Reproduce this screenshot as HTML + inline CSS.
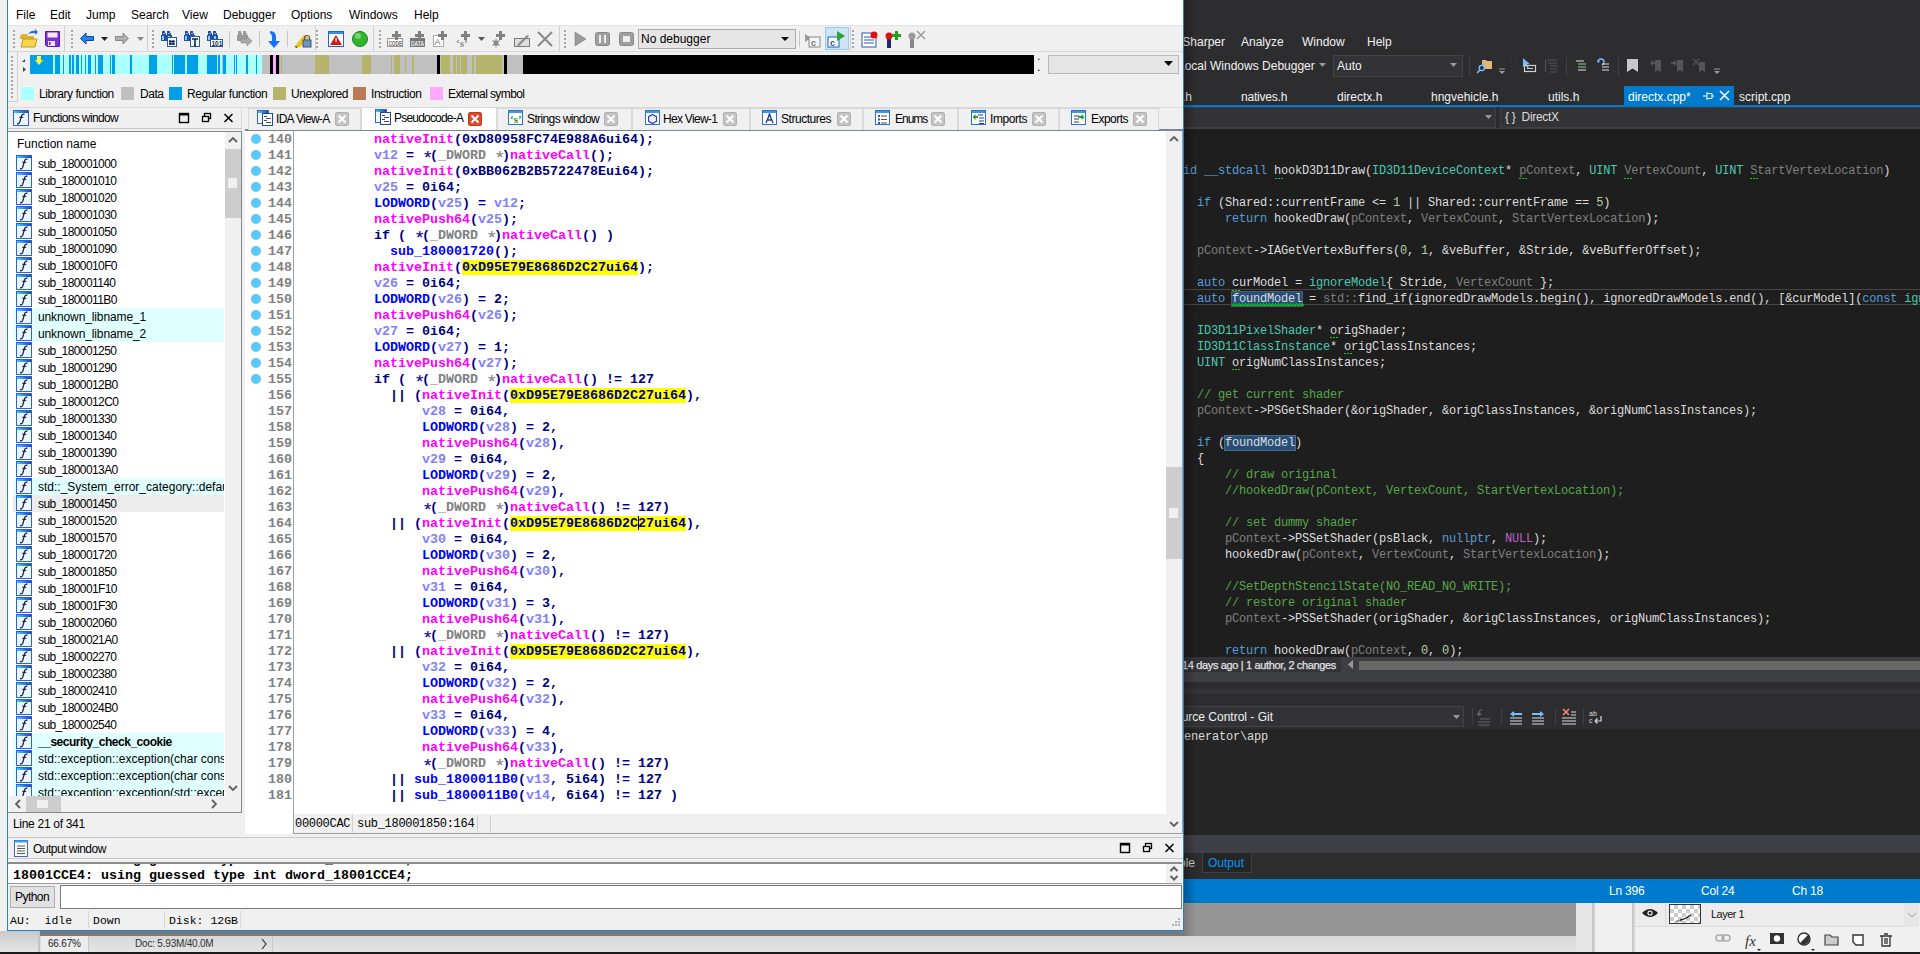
<!DOCTYPE html>
<html><head><meta charset="utf-8">
<style>
*{margin:0;padding:0;box-sizing:border-box}
html,body{width:1920px;height:954px;overflow:hidden;background:#1e1e1e;font-family:"Liberation Sans",sans-serif;font-size:12px}
.a{position:absolute}
.t{position:absolute;white-space:pre;line-height:16px;letter-spacing:-0.45px}
pre,.m{font-family:"Liberation Mono",monospace}
/* IDA */
#ida{left:0;top:0;width:1184px;height:931px;background:#f0f0f0}
.menu span{position:absolute;top:8px;color:#000}
.ico{position:absolute}
.tab{position:absolute;top:108px;height:22px;border:1px solid #d9d9d9;border-bottom:none;background:#f0f0f0}
.tabx{position:absolute;width:14px;height:14px;border-radius:2px;background:#c8c8c8;top:4px}
.tabx:before,.tabx:after{content:"";position:absolute;left:6px;top:2px;width:2px;height:10px;background:#fff;transform:rotate(45deg)}
.tabx:after{transform:rotate(-45deg)}
.fl div{position:absolute;left:13px;width:211px;height:17px;overflow:hidden}
.fl span{position:absolute;left:25px;top:2px;white-space:pre;color:#000;font-size:12px;line-height:15px;letter-spacing:-0.6px}
.fi2{position:absolute;display:block;left:3px;top:0px;width:16px;height:16px}
.fi{position:absolute;display:block;left:3px;top:1px;width:16px;height:15px;border:1px solid #2a5fc9;background:#e8f6ff}
.fi:before{content:"";position:absolute;left:0;top:0;right:0;height:2px;background:linear-gradient(90deg,#3fb8ff,#1d47c8)}
.fi:after{content:"\0192";position:absolute;left:3px;top:0px;font-family:"Liberation Serif",serif;font-style:italic;font-size:13px;line-height:14px;color:#1a1a3a}
#code{position:absolute;left:374px;top:132px;font-family:"Liberation Mono",monospace;font-weight:bold;font-size:13.333px;line-height:16px;color:#000080;white-space:pre}
#code div{height:16px}
#code b{font-weight:bold}
.ast{font-style:normal;position:relative;top:5px;display:inline-block;width:8px;text-align:center;font-size:19px;line-height:0;font-weight:normal}
.cur{display:inline-block;width:1px;height:14px;background:#000;vertical-align:-3px;margin-right:-1px}
.f{color:#ff00ff}.v{color:#8080ff}.g{color:#808080}.b{color:#0000ff}.y{background:#ffff00}
#ln{position:absolute;left:268px;top:132px;font-family:"Liberation Mono",monospace;font-weight:bold;font-size:13.333px;line-height:16px;color:#808080;white-space:pre}
.dot{position:absolute;left:251px;width:10px;height:10px;border-radius:50%;background:#5ac8fa}
/* VS */
#vs{left:1184px;top:0;width:736px;height:903px;background:#2d2d30;overflow:hidden}
.vm span{position:absolute;top:35px;color:#f1f1f1}
#vcode{position:absolute;left:-15px;top:163px;font-family:"Liberation Mono",monospace;font-size:12px;letter-spacing:-0.2px;line-height:16px;color:#dcdcdc;white-space:pre}
#vcode div{height:16px}
#vcode b{font-weight:normal}
.hl{outline:1px solid #555a60;background:#264f78}
.hl2{background:#264f78;outline:1px solid #4a6a8a}
.k{color:#569cd6}.ty{color:#4ec9b0}.p{color:#7f7f7f}.c{color:#57a64a}.n{color:#b5cea8}.mac{color:#bd63c5}
</style></head><body>
<svg width="0" height="0" style="position:absolute"><defs><linearGradient id="fg" x1="0" x2="1"><stop offset="0" stop-color="#3fd0ff"/><stop offset="1" stop-color="#1a40c0"/></linearGradient></defs></svg>


<!-- bottom photoshop area -->
<div class="a" style="left:0;top:902px;width:1576px;height:34px;background:#959595"></div>
<div class="a" style="left:0;top:936px;width:1576px;height:16px;background:linear-gradient(#d8d8d8,#e4e4e4)"></div>
<div class="a" style="left:0;top:931px;width:1196px;height:5px;background:#7a7a7a"></div>
<div class="a" style="left:1184px;top:902px;width:12px;height:34px;background:linear-gradient(90deg,#7a7a7a,#959595)"></div>
<div class="a" style="left:0;top:931px;width:40px;height:21px;background:linear-gradient(#c8c8c8,#e6e6e6)"></div>
<div class="a" style="left:38px;top:931px;width:2px;height:21px;background:#c4c4c4"></div>
<div class="a" style="left:41px;top:936px;width:47px;height:16px;background:#ececec"></div>
<div class="a" style="left:88px;top:936px;width:1px;height:16px;background:#c8c8c8"></div>
<div class="a" style="left:272px;top:936px;width:1px;height:16px;background:#c8c8c8"></div>
<div class="t" style="left:48px;top:936px;font-size:10px;line-height:16px;color:#222;letter-spacing:-0.2px">66.67%</div>
<div class="t" style="left:135px;top:936px;font-size:10px;line-height:16px;color:#333;letter-spacing:-0.2px">Doc: 5.93M/40.0M</div>
<svg class="a" style="left:260px;top:938px" width="8" height="12"><path d="M2 1l4 5-4 5" fill="none" stroke="#333" stroke-width="1.2"/></svg>
<div class="a" style="left:0;top:952px;width:1920px;height:2px;background:#1a1a1a"></div>
<div class="a" style="left:1576px;top:902px;width:16px;height:50px;background:#e6e6e6"></div>
<div class="a" style="left:1592px;top:902px;width:3px;height:50px;background:#d0d0d0;border-left:1px solid #c4c4c4"></div>
<div class="a" style="left:1595px;top:902px;width:38px;height:50px;background:#f0f0f0"></div>
<div class="a" style="left:1632px;top:902px;width:3px;height:50px;background:#d4d4d4;border-left:1px solid #c4c4c4"></div>
<div class="a" style="left:1635px;top:902px;width:285px;height:50px;background:#f0f0f0"></div>
<div class="a" style="left:1635px;top:902px;width:284px;height:25px;background:#ececec;border-bottom:1px solid #dadada"></div>
<div class="a" style="left:1665px;top:902px;width:1px;height:25px;background:#dadada"></div>
<svg class="a" style="left:1641px;top:907px" width="18" height="12"><path d="M1 6q8-8 16 0q-8 8-16 0z" fill="#222"/><circle cx="9" cy="6" r="2.6" fill="#fff"/><circle cx="9" cy="6" r="1.5" fill="#222"/></svg>
<div class="a" style="left:1669px;top:904px;width:32px;height:20px;border:1px solid #333;background-color:#fff;background-image:linear-gradient(45deg,#ccc 25%,transparent 25%,transparent 75%,#ccc 75%),linear-gradient(45deg,#ccc 25%,transparent 25%,transparent 75%,#ccc 75%);background-size:8px 8px;background-position:0 0,4px 4px"></div>
<div class="t" style="left:1711px;top:906px;font-size:11px;color:#111;letter-spacing:-0.5px">Layer 1</div>
<svg class="a" style="left:1670px;top:905px" width="30" height="18"><path d="M10 15 q6-1 9-4 M19 11 l2-1" fill="none" stroke="#222" stroke-width="1.3"/><path d="M6 16h6" stroke="#555"/></svg>
<div class="a" style="left:1904px;top:903px;width:15px;height:24px;background:#e6e6e6"></div>
<svg class="a" style="left:1907px;top:912px" width="10" height="6"><path d="M1 1l4 4 4-4" fill="none" stroke="#999"/></svg>
<svg class="a" style="left:1710px;top:930px" width="190" height="22">
  <g fill="none" stroke="#aaa" stroke-width="1.5"><rect x="6" y="5" width="8" height="6" rx="3"/><rect x="12" y="5" width="8" height="6" rx="3"/></g>
  <text x="35" y="16" font-family="Liberation Serif" font-style="italic" font-size="15" fill="#333">fx</text>
  <path d="M47 19h4l-2 2z" fill="#222"/>
  <rect x="60" y="3" width="14" height="11" fill="#333"/><circle cx="67" cy="8.5" r="3.2" fill="#fff"/>
  <circle cx="94" cy="9" r="6" fill="#fff" stroke="#333" stroke-width="1.4"/><path d="M98.2 4.8 a6 6 0 0 1 -8.4 8.4z" fill="#333"/>
  <path d="M101 19h4l-2 2z" fill="#222"/>
  <path d="M115 5h5l2 2h6v8h-13z" fill="#ccc" stroke="#444" stroke-width="1.2"/>
  <path d="M143 5h10v10h-7l-3-3z" fill="#fff" stroke="#333" stroke-width="1.4"/>
  <path d="M170 6h12M174 4h4M172 6v10h8v-10M175 8v6M177 8v6" fill="none" stroke="#333" stroke-width="1.3"/>
</svg>

<div class="a" style="left:1184px;top:0;width:12px;height:903px;background:linear-gradient(90deg,rgba(0,0,0,0.28),rgba(0,0,0,0));z-index:5"></div>
<!-- left background strip -->
<div class="a" style="left:0;top:0;width:7px;height:931px;background:linear-gradient(90deg,#c4c4c4 0,#c8c8c8 1px,#dedede 2px,#e2e2e2)"></div>
<div class="a" style="left:5px;top:1px;width:2px;height:8px;background:repeating-linear-gradient(#8a8a8a 0 1px,transparent 1px 2px)"></div>
<div class="a" style="left:1px;top:16px;width:6px;height:12px;background:#cfcfcf"></div>
<div class="a" style="left:6px;top:20px;width:1px;height:5px;background:#222"></div>
<div class="a" style="left:3px;top:67px;width:4px;height:30px;background:#a8a8a8;border-radius:2px 0 0 2px"></div>
<div class="a" style="left:4px;top:595px;width:3px;height:8px;background:#333"></div>
<div class="a" style="left:4px;top:612px;width:3px;height:20px;border:1px solid #555;border-right:none;background:#fff"></div>

<!-- IDA window -->
<div id="ida" class="a">
  <div class="a" style="left:7px;top:0;width:1px;height:931px;background:#1883d7"></div>
  <div class="a" style="left:1183px;top:0;width:1px;height:931px;background:#1883d7"></div>
  <div class="a" style="left:7px;top:930px;width:1177px;height:1px;background:#1883d7"></div>
  <!-- menu -->
  <div class="a menu" style="left:8px;top:0;width:1175px;height:25px;background:#fff">
    <span style="left:8px">File</span><span style="left:42px">Edit</span><span style="left:78px">Jump</span><span style="left:123px">Search</span><span style="left:174px">View</span><span style="left:215px">Debugger</span><span style="left:283px">Options</span><span style="left:341px">Windows</span><span style="left:406px">Help</span>
  </div>

  <!-- toolbar row -->
  <div class="a" style="left:8px;top:25px;width:1175px;height:27px;background:#f0f0f0;border-top:1px solid #e3e3e3"></div>
  <div class="a" style="left:8px;top:51px;width:1175px;height:1px;background:#d7d7d7"></div>
  <svg class="a" style="left:8px;top:25px" width="1175" height="27">
    <g fill="#a8a8a8">
      <!-- grips -->
      <rect x="5" y="5" width="2" height="2"/><rect x="5" y="9" width="2" height="2"/><rect x="5" y="13" width="2" height="2"/><rect x="5" y="17" width="2" height="2"/><rect x="5" y="21" width="2" height="2"/><rect x="63" y="5" width="2" height="2"/><rect x="63" y="9" width="2" height="2"/><rect x="63" y="13" width="2" height="2"/><rect x="63" y="17" width="2" height="2"/><rect x="63" y="21" width="2" height="2"/><rect x="144" y="5" width="2" height="2"/><rect x="144" y="9" width="2" height="2"/><rect x="144" y="13" width="2" height="2"/><rect x="144" y="17" width="2" height="2"/><rect x="144" y="21" width="2" height="2"/><rect x="308" y="5" width="2" height="2"/><rect x="308" y="9" width="2" height="2"/><rect x="308" y="13" width="2" height="2"/><rect x="308" y="17" width="2" height="2"/><rect x="308" y="21" width="2" height="2"/><rect x="371" y="5" width="2" height="2"/><rect x="371" y="9" width="2" height="2"/><rect x="371" y="13" width="2" height="2"/><rect x="371" y="17" width="2" height="2"/><rect x="371" y="21" width="2" height="2"/><rect x="556" y="5" width="2" height="2"/><rect x="556" y="9" width="2" height="2"/><rect x="556" y="13" width="2" height="2"/><rect x="556" y="17" width="2" height="2"/><rect x="556" y="21" width="2" height="2"/><rect x="844" y="5" width="2" height="2"/><rect x="844" y="9" width="2" height="2"/><rect x="844" y="13" width="2" height="2"/><rect x="844" y="17" width="2" height="2"/><rect x="844" y="21" width="2" height="2"/>
    </g>
    <g stroke="#c5c5c5" stroke-width="1">
      <line x1="56.5" y1="1" x2="56.5" y2="26" stroke="#d0d0d0"/>
      <line x1="139.5" y1="1" x2="139.5" y2="26" stroke="#d0d0d0"/>
      <line x1="221.5" y1="6" x2="221.5" y2="22"/>
      <line x1="251.5" y1="6" x2="251.5" y2="22"/>
      <line x1="279.5" y1="6" x2="279.5" y2="22"/>
      <line x1="307.5" y1="1" x2="307.5" y2="26" stroke="#d0d0d0"/>
      <line x1="365.5" y1="1" x2="365.5" y2="26" stroke="#d0d0d0"/>
      <line x1="551.5" y1="1" x2="551.5" y2="26" stroke="#d0d0d0"/>
      <line x1="791.5" y1="6" x2="791.5" y2="22"/>
      <line x1="842.5" y1="1" x2="842.5" y2="26" stroke="#d0d0d0"/>
    </g>
  </svg>
  <div class="a" style="left:8px;top:52px;width:1175px;height:55px;background:#f0f0f0"></div>
  <div class="a" style="left:30px;top:55px;width:232px;height:19px;background:#aaffff"></div>
  <div class="a" style="left:262px;top:55px;width:261px;height:19px;background:#c0c0c0"></div>
  <div class="a" style="left:30px;top:55px;width:23px;height:19px;background:#00a0e6"></div>
  <div class="a" style="left:55px;top:55px;width:5px;height:19px;background:#00a0e6"></div>
  <div class="a" style="left:63px;top:55px;width:1px;height:19px;background:#00a0e6"></div>
  <div class="a" style="left:69px;top:55px;width:2px;height:19px;background:#00a0e6"></div>
  <div class="a" style="left:72px;top:55px;width:2px;height:19px;background:#00a0e6"></div>
  <div class="a" style="left:76px;top:55px;width:3px;height:19px;background:#00a0e6"></div>
  <div class="a" style="left:81px;top:55px;width:1px;height:19px;background:#00a0e6"></div>
  <div class="a" style="left:85px;top:55px;width:1px;height:19px;background:#00a0e6"></div>
  <div class="a" style="left:88px;top:55px;width:3px;height:19px;background:#00a0e6"></div>
  <div class="a" style="left:95px;top:55px;width:1px;height:19px;background:#00a0e6"></div>
  <div class="a" style="left:98px;top:55px;width:5px;height:19px;background:#00a0e6"></div>
  <div class="a" style="left:110px;top:55px;width:1px;height:19px;background:#00a0e6"></div>
  <div class="a" style="left:112px;top:55px;width:3px;height:19px;background:#00a0e6"></div>
  <div class="a" style="left:130px;top:55px;width:2px;height:19px;background:#00a0e6"></div>
  <div class="a" style="left:149px;top:55px;width:8px;height:19px;background:#00a0e6"></div>
  <div class="a" style="left:172px;top:55px;width:1px;height:19px;background:#00a0e6"></div>
  <div class="a" style="left:174px;top:55px;width:11px;height:19px;background:#00a0e6"></div>
  <div class="a" style="left:187px;top:55px;width:11px;height:19px;background:#00a0e6"></div>
  <div class="a" style="left:207px;top:55px;width:10px;height:19px;background:#00a0e6"></div>
  <div class="a" style="left:218px;top:55px;width:2px;height:19px;background:#00a0e6"></div>
  <div class="a" style="left:223px;top:55px;width:3px;height:19px;background:#00a0e6"></div>
  <div class="a" style="left:234px;top:55px;width:1px;height:19px;background:#00a0e6"></div>
  <div class="a" style="left:236px;top:55px;width:1px;height:19px;background:#00a0e6"></div>
  <div class="a" style="left:246px;top:55px;width:2px;height:19px;background:#00a0e6"></div>
  <div class="a" style="left:256px;top:55px;width:1px;height:19px;background:#00a0e6"></div>
  <div class="a" style="left:222px;top:55px;width:1px;height:19px;background:#c0c0c0"></div>
  <div class="a" style="left:270px;top:55px;width:3px;height:19px;background:#000000"></div>
  <div class="a" style="left:273px;top:55px;width:3px;height:19px;background:#ffa8ff"></div>
  <div class="a" style="left:276px;top:55px;width:3px;height:19px;background:#000000"></div>
  <div class="a" style="left:279px;top:55px;width:1px;height:19px;background:#b4b46c"></div>
  <div class="a" style="left:281px;top:55px;width:1px;height:19px;background:#b4b46c"></div>
  <div class="a" style="left:315px;top:55px;width:14px;height:19px;background:#b4b46c"></div>
  <div class="a" style="left:362px;top:55px;width:9px;height:19px;background:#b4b46c"></div>
  <div class="a" style="left:391px;top:55px;width:1px;height:19px;background:#b4b46c"></div>
  <div class="a" style="left:394px;top:55px;width:6px;height:19px;background:#b4b46c"></div>
  <div class="a" style="left:405px;top:55px;width:1px;height:19px;background:#b4b46c"></div>
  <div class="a" style="left:412px;top:55px;width:2px;height:19px;background:#b4b46c"></div>
  <div class="a" style="left:437px;top:55px;width:3px;height:19px;background:#000000"></div>
  <div class="a" style="left:441px;top:55px;width:9px;height:19px;background:#b4b46c"></div>
  <div class="a" style="left:453px;top:55px;width:3px;height:19px;background:#b4b46c"></div>
  <div class="a" style="left:457px;top:55px;width:3px;height:19px;background:#b4b46c"></div>
  <div class="a" style="left:461px;top:55px;width:6px;height:19px;background:#b4b46c"></div>
  <div class="a" style="left:472px;top:55px;width:2px;height:19px;background:#b4b46c"></div>
  <div class="a" style="left:476px;top:55px;width:26px;height:19px;background:#b4b46c"></div>
  <div class="a" style="left:504px;top:55px;width:3px;height:19px;background:#000000"></div>
  <div class="a" style="left:523px;top:55px;width:511px;height:19px;background:#000000"></div>
  <svg class="a" style="left:34px;top:56px" width="10" height="10"><path d="M3 0 h4 v4 h2 l-4 5 -4-5 h2z" fill="#ffff40"/></svg>
  <svg class="a" style="left:20px;top:55px" width="8" height="20"><path d="M5 4 l0 3 -3 0z" fill="#444"/><path d="M3 12 l3 2.5 -3 2.5z" fill="#444"/></svg>
  <div class="a" style="left:8px;top:52px;width:10px;height:50px;border-right:1px solid #d0d0d0;border-bottom:1px solid #d0d0d0"></div>
  <svg class="a" style="left:11px;top:56px" width="4" height="45"><rect x="0" y="0" width="2" height="2" fill="#a8a8a8"/><rect x="0" y="4" width="2" height="2" fill="#a8a8a8"/><rect x="0" y="8" width="2" height="2" fill="#a8a8a8"/><rect x="0" y="12" width="2" height="2" fill="#a8a8a8"/><rect x="0" y="16" width="2" height="2" fill="#a8a8a8"/><rect x="0" y="20" width="2" height="2" fill="#a8a8a8"/><rect x="0" y="24" width="2" height="2" fill="#a8a8a8"/><rect x="0" y="28" width="2" height="2" fill="#a8a8a8"/><rect x="0" y="32" width="2" height="2" fill="#a8a8a8"/><rect x="0" y="36" width="2" height="2" fill="#a8a8a8"/><rect x="0" y="40" width="2" height="2" fill="#a8a8a8"/></svg>
  <svg class="a" style="left:1035px;top:55px" width="8" height="20"><path d="M3 3 l2 2 h-2z" fill="#444"/><path d="M3 14 l2 2 h-2z" fill="#444"/></svg>
  <div class="a" style="left:1048px;top:55px;width:131px;height:19px;background:#e5e5e5;border:1px solid #b9b9b9"></div>
  <svg class="a" style="left:1164px;top:61px" width="10" height="6"><path d="M0 0 h9 l-4.5 5z" fill="#000"/></svg>
  <div class="a" style="left:21px;top:87px;width:13px;height:13px;background:#aaffff"></div>
  <div class="t" style="left:39px;top:86px;color:#000">Library function</div>
  <div class="a" style="left:121px;top:87px;width:13px;height:13px;background:#c0c0c0"></div>
  <div class="t" style="left:140px;top:86px;color:#000">Data</div>
  <div class="a" style="left:169px;top:87px;width:13px;height:13px;background:#00a0e6"></div>
  <div class="t" style="left:187px;top:86px;color:#000">Regular function</div>
  <div class="a" style="left:273px;top:87px;width:13px;height:13px;background:#b4b46c"></div>
  <div class="t" style="left:291px;top:86px;color:#000">Unexplored</div>
  <div class="a" style="left:353px;top:87px;width:13px;height:13px;background:#b97a57"></div>
  <div class="t" style="left:371px;top:86px;color:#000">Instruction</div>
  <div class="a" style="left:430px;top:87px;width:13px;height:13px;background:#ffa8ff"></div>
  <div class="t" style="left:448px;top:86px;color:#000;letter-spacing:-0.6px">External symbol</div>
  <div class="a" style="left:8px;top:107px;width:1175px;height:1px;background:#d9d9d9"></div>

  <!-- Functions window -->
  <div class="a" style="left:8px;top:108px;width:234px;height:21px;background:#f0f0f0;border-right:1px solid #d9d9d9;border-bottom:1px solid #c8c8c8"></div>
  <i class="fi2" style="left:13px;top:110px"><svg width="16" height="16" style="position:absolute;left:0;top:0"><rect x="0.5" y="0.5" width="15" height="15" fill="#e9f8ff" stroke="#2f62d0"/><rect x="1" y="1" width="14" height="2" fill="url(#fg)"/><path d="M11.5 4.2 q-2-0.6-2.8 1.2 l-2 7 q-0.6 1.8-2.6 1.2" fill="none" stroke="#1a1a40" stroke-width="1.3"/><path d="M6.3 7.3h4" stroke="#1a1a40" stroke-width="1.1"/></svg></i>
  <div class="t" style="left:33px;top:110px;color:#000;letter-spacing:-0.65px">Functions window</div>
  <svg class="a" style="left:176px;top:111px" width="60" height="14">
    <rect x="3.5" y="2.5" width="9" height="9" fill="none" stroke="#000" stroke-width="1.4"/><rect x="3" y="2" width="10" height="2.5" fill="#000"/>
    <rect x="28.5" y="2.5" width="6" height="5" fill="none" stroke="#000" stroke-width="1.3"/>
    <rect x="26.5" y="5.5" width="6" height="5" fill="#f0f0f0" stroke="#000" stroke-width="1.3"/>
    <path d="M48.5 3 l8 8 M56.5 3 l-8 8" stroke="#000" stroke-width="1.5"/>
  </svg>
  <div class="a" style="left:8px;top:131px;width:234px;height:682px;background:#fff;border:1px solid #828790;border-left:none"></div>
  <div class="t" style="left:17px;top:136px;color:#000;letter-spacing:0">Function name</div>
  <div class="fl a" style="left:0;top:0;width:242px;height:796px;overflow:hidden">
    <div style="top:155px;background:transparent"><i class="fi2"><svg width="16" height="16" style="position:absolute;left:0;top:0"><rect x="0.5" y="0.5" width="15" height="15" fill="#e9f8ff" stroke="#2f62d0"/><rect x="1" y="1" width="14" height="2" fill="url(#fg)"/><path d="M11.5 4.2 q-2-0.6-2.8 1.2 l-2 7 q-0.6 1.8-2.6 1.2" fill="none" stroke="#1a1a40" stroke-width="1.3"/><path d="M6.3 7.3h4" stroke="#1a1a40" stroke-width="1.1"/></svg></i><span style="letter-spacing:-0.6px">sub_180001000</span></div>
    <div style="top:172px;background:transparent"><i class="fi2"><svg width="16" height="16" style="position:absolute;left:0;top:0"><rect x="0.5" y="0.5" width="15" height="15" fill="#e9f8ff" stroke="#2f62d0"/><rect x="1" y="1" width="14" height="2" fill="url(#fg)"/><path d="M11.5 4.2 q-2-0.6-2.8 1.2 l-2 7 q-0.6 1.8-2.6 1.2" fill="none" stroke="#1a1a40" stroke-width="1.3"/><path d="M6.3 7.3h4" stroke="#1a1a40" stroke-width="1.1"/></svg></i><span style="letter-spacing:-0.6px">sub_180001010</span></div>
    <div style="top:189px;background:transparent"><i class="fi2"><svg width="16" height="16" style="position:absolute;left:0;top:0"><rect x="0.5" y="0.5" width="15" height="15" fill="#e9f8ff" stroke="#2f62d0"/><rect x="1" y="1" width="14" height="2" fill="url(#fg)"/><path d="M11.5 4.2 q-2-0.6-2.8 1.2 l-2 7 q-0.6 1.8-2.6 1.2" fill="none" stroke="#1a1a40" stroke-width="1.3"/><path d="M6.3 7.3h4" stroke="#1a1a40" stroke-width="1.1"/></svg></i><span style="letter-spacing:-0.6px">sub_180001020</span></div>
    <div style="top:206px;background:transparent"><i class="fi2"><svg width="16" height="16" style="position:absolute;left:0;top:0"><rect x="0.5" y="0.5" width="15" height="15" fill="#e9f8ff" stroke="#2f62d0"/><rect x="1" y="1" width="14" height="2" fill="url(#fg)"/><path d="M11.5 4.2 q-2-0.6-2.8 1.2 l-2 7 q-0.6 1.8-2.6 1.2" fill="none" stroke="#1a1a40" stroke-width="1.3"/><path d="M6.3 7.3h4" stroke="#1a1a40" stroke-width="1.1"/></svg></i><span style="letter-spacing:-0.6px">sub_180001030</span></div>
    <div style="top:223px;background:transparent"><i class="fi2"><svg width="16" height="16" style="position:absolute;left:0;top:0"><rect x="0.5" y="0.5" width="15" height="15" fill="#e9f8ff" stroke="#2f62d0"/><rect x="1" y="1" width="14" height="2" fill="url(#fg)"/><path d="M11.5 4.2 q-2-0.6-2.8 1.2 l-2 7 q-0.6 1.8-2.6 1.2" fill="none" stroke="#1a1a40" stroke-width="1.3"/><path d="M6.3 7.3h4" stroke="#1a1a40" stroke-width="1.1"/></svg></i><span style="letter-spacing:-0.6px">sub_180001050</span></div>
    <div style="top:240px;background:transparent"><i class="fi2"><svg width="16" height="16" style="position:absolute;left:0;top:0"><rect x="0.5" y="0.5" width="15" height="15" fill="#e9f8ff" stroke="#2f62d0"/><rect x="1" y="1" width="14" height="2" fill="url(#fg)"/><path d="M11.5 4.2 q-2-0.6-2.8 1.2 l-2 7 q-0.6 1.8-2.6 1.2" fill="none" stroke="#1a1a40" stroke-width="1.3"/><path d="M6.3 7.3h4" stroke="#1a1a40" stroke-width="1.1"/></svg></i><span style="letter-spacing:-0.6px">sub_180001090</span></div>
    <div style="top:257px;background:transparent"><i class="fi2"><svg width="16" height="16" style="position:absolute;left:0;top:0"><rect x="0.5" y="0.5" width="15" height="15" fill="#e9f8ff" stroke="#2f62d0"/><rect x="1" y="1" width="14" height="2" fill="url(#fg)"/><path d="M11.5 4.2 q-2-0.6-2.8 1.2 l-2 7 q-0.6 1.8-2.6 1.2" fill="none" stroke="#1a1a40" stroke-width="1.3"/><path d="M6.3 7.3h4" stroke="#1a1a40" stroke-width="1.1"/></svg></i><span style="letter-spacing:-0.6px">sub_1800010F0</span></div>
    <div style="top:274px;background:transparent"><i class="fi2"><svg width="16" height="16" style="position:absolute;left:0;top:0"><rect x="0.5" y="0.5" width="15" height="15" fill="#e9f8ff" stroke="#2f62d0"/><rect x="1" y="1" width="14" height="2" fill="url(#fg)"/><path d="M11.5 4.2 q-2-0.6-2.8 1.2 l-2 7 q-0.6 1.8-2.6 1.2" fill="none" stroke="#1a1a40" stroke-width="1.3"/><path d="M6.3 7.3h4" stroke="#1a1a40" stroke-width="1.1"/></svg></i><span style="letter-spacing:-0.6px">sub_180001140</span></div>
    <div style="top:291px;background:transparent"><i class="fi2"><svg width="16" height="16" style="position:absolute;left:0;top:0"><rect x="0.5" y="0.5" width="15" height="15" fill="#e9f8ff" stroke="#2f62d0"/><rect x="1" y="1" width="14" height="2" fill="url(#fg)"/><path d="M11.5 4.2 q-2-0.6-2.8 1.2 l-2 7 q-0.6 1.8-2.6 1.2" fill="none" stroke="#1a1a40" stroke-width="1.3"/><path d="M6.3 7.3h4" stroke="#1a1a40" stroke-width="1.1"/></svg></i><span style="letter-spacing:-0.6px">sub_1800011B0</span></div>
    <div style="top:308px;background:#e0ffff"><i class="fi2"><svg width="16" height="16" style="position:absolute;left:0;top:0"><rect x="0.5" y="0.5" width="15" height="15" fill="#e9f8ff" stroke="#2f62d0"/><rect x="1" y="1" width="14" height="2" fill="url(#fg)"/><path d="M11.5 4.2 q-2-0.6-2.8 1.2 l-2 7 q-0.6 1.8-2.6 1.2" fill="none" stroke="#1a1a40" stroke-width="1.3"/><path d="M6.3 7.3h4" stroke="#1a1a40" stroke-width="1.1"/></svg></i><span style="letter-spacing:-0.12px">unknown_libname_1</span></div>
    <div style="top:325px;background:#e0ffff"><i class="fi2"><svg width="16" height="16" style="position:absolute;left:0;top:0"><rect x="0.5" y="0.5" width="15" height="15" fill="#e9f8ff" stroke="#2f62d0"/><rect x="1" y="1" width="14" height="2" fill="url(#fg)"/><path d="M11.5 4.2 q-2-0.6-2.8 1.2 l-2 7 q-0.6 1.8-2.6 1.2" fill="none" stroke="#1a1a40" stroke-width="1.3"/><path d="M6.3 7.3h4" stroke="#1a1a40" stroke-width="1.1"/></svg></i><span style="letter-spacing:-0.12px">unknown_libname_2</span></div>
    <div style="top:342px;background:transparent"><i class="fi2"><svg width="16" height="16" style="position:absolute;left:0;top:0"><rect x="0.5" y="0.5" width="15" height="15" fill="#e9f8ff" stroke="#2f62d0"/><rect x="1" y="1" width="14" height="2" fill="url(#fg)"/><path d="M11.5 4.2 q-2-0.6-2.8 1.2 l-2 7 q-0.6 1.8-2.6 1.2" fill="none" stroke="#1a1a40" stroke-width="1.3"/><path d="M6.3 7.3h4" stroke="#1a1a40" stroke-width="1.1"/></svg></i><span style="letter-spacing:-0.6px">sub_180001250</span></div>
    <div style="top:359px;background:transparent"><i class="fi2"><svg width="16" height="16" style="position:absolute;left:0;top:0"><rect x="0.5" y="0.5" width="15" height="15" fill="#e9f8ff" stroke="#2f62d0"/><rect x="1" y="1" width="14" height="2" fill="url(#fg)"/><path d="M11.5 4.2 q-2-0.6-2.8 1.2 l-2 7 q-0.6 1.8-2.6 1.2" fill="none" stroke="#1a1a40" stroke-width="1.3"/><path d="M6.3 7.3h4" stroke="#1a1a40" stroke-width="1.1"/></svg></i><span style="letter-spacing:-0.6px">sub_180001290</span></div>
    <div style="top:376px;background:transparent"><i class="fi2"><svg width="16" height="16" style="position:absolute;left:0;top:0"><rect x="0.5" y="0.5" width="15" height="15" fill="#e9f8ff" stroke="#2f62d0"/><rect x="1" y="1" width="14" height="2" fill="url(#fg)"/><path d="M11.5 4.2 q-2-0.6-2.8 1.2 l-2 7 q-0.6 1.8-2.6 1.2" fill="none" stroke="#1a1a40" stroke-width="1.3"/><path d="M6.3 7.3h4" stroke="#1a1a40" stroke-width="1.1"/></svg></i><span style="letter-spacing:-0.6px">sub_1800012B0</span></div>
    <div style="top:393px;background:transparent"><i class="fi2"><svg width="16" height="16" style="position:absolute;left:0;top:0"><rect x="0.5" y="0.5" width="15" height="15" fill="#e9f8ff" stroke="#2f62d0"/><rect x="1" y="1" width="14" height="2" fill="url(#fg)"/><path d="M11.5 4.2 q-2-0.6-2.8 1.2 l-2 7 q-0.6 1.8-2.6 1.2" fill="none" stroke="#1a1a40" stroke-width="1.3"/><path d="M6.3 7.3h4" stroke="#1a1a40" stroke-width="1.1"/></svg></i><span style="letter-spacing:-0.6px">sub_1800012C0</span></div>
    <div style="top:410px;background:transparent"><i class="fi2"><svg width="16" height="16" style="position:absolute;left:0;top:0"><rect x="0.5" y="0.5" width="15" height="15" fill="#e9f8ff" stroke="#2f62d0"/><rect x="1" y="1" width="14" height="2" fill="url(#fg)"/><path d="M11.5 4.2 q-2-0.6-2.8 1.2 l-2 7 q-0.6 1.8-2.6 1.2" fill="none" stroke="#1a1a40" stroke-width="1.3"/><path d="M6.3 7.3h4" stroke="#1a1a40" stroke-width="1.1"/></svg></i><span style="letter-spacing:-0.6px">sub_180001330</span></div>
    <div style="top:427px;background:transparent"><i class="fi2"><svg width="16" height="16" style="position:absolute;left:0;top:0"><rect x="0.5" y="0.5" width="15" height="15" fill="#e9f8ff" stroke="#2f62d0"/><rect x="1" y="1" width="14" height="2" fill="url(#fg)"/><path d="M11.5 4.2 q-2-0.6-2.8 1.2 l-2 7 q-0.6 1.8-2.6 1.2" fill="none" stroke="#1a1a40" stroke-width="1.3"/><path d="M6.3 7.3h4" stroke="#1a1a40" stroke-width="1.1"/></svg></i><span style="letter-spacing:-0.6px">sub_180001340</span></div>
    <div style="top:444px;background:transparent"><i class="fi2"><svg width="16" height="16" style="position:absolute;left:0;top:0"><rect x="0.5" y="0.5" width="15" height="15" fill="#e9f8ff" stroke="#2f62d0"/><rect x="1" y="1" width="14" height="2" fill="url(#fg)"/><path d="M11.5 4.2 q-2-0.6-2.8 1.2 l-2 7 q-0.6 1.8-2.6 1.2" fill="none" stroke="#1a1a40" stroke-width="1.3"/><path d="M6.3 7.3h4" stroke="#1a1a40" stroke-width="1.1"/></svg></i><span style="letter-spacing:-0.6px">sub_180001390</span></div>
    <div style="top:461px;background:transparent"><i class="fi2"><svg width="16" height="16" style="position:absolute;left:0;top:0"><rect x="0.5" y="0.5" width="15" height="15" fill="#e9f8ff" stroke="#2f62d0"/><rect x="1" y="1" width="14" height="2" fill="url(#fg)"/><path d="M11.5 4.2 q-2-0.6-2.8 1.2 l-2 7 q-0.6 1.8-2.6 1.2" fill="none" stroke="#1a1a40" stroke-width="1.3"/><path d="M6.3 7.3h4" stroke="#1a1a40" stroke-width="1.1"/></svg></i><span style="letter-spacing:-0.6px">sub_1800013A0</span></div>
    <div style="top:478px;background:#e0ffff"><i class="fi2"><svg width="16" height="16" style="position:absolute;left:0;top:0"><rect x="0.5" y="0.5" width="15" height="15" fill="#e9f8ff" stroke="#2f62d0"/><rect x="1" y="1" width="14" height="2" fill="url(#fg)"/><path d="M11.5 4.2 q-2-0.6-2.8 1.2 l-2 7 q-0.6 1.8-2.6 1.2" fill="none" stroke="#1a1a40" stroke-width="1.3"/><path d="M6.3 7.3h4" stroke="#1a1a40" stroke-width="1.1"/></svg></i><span style="letter-spacing:0px">std::_System_error_category::default_name</span></div>
    <div style="top:495px;background:#ececec"><i class="fi2"><svg width="16" height="16" style="position:absolute;left:0;top:0"><rect x="0.5" y="0.5" width="15" height="15" fill="#e9f8ff" stroke="#2f62d0"/><rect x="1" y="1" width="14" height="2" fill="url(#fg)"/><path d="M11.5 4.2 q-2-0.6-2.8 1.2 l-2 7 q-0.6 1.8-2.6 1.2" fill="none" stroke="#1a1a40" stroke-width="1.3"/><path d="M6.3 7.3h4" stroke="#1a1a40" stroke-width="1.1"/></svg></i><span style="letter-spacing:-0.6px">sub_180001450</span></div>
    <div style="top:512px;background:transparent"><i class="fi2"><svg width="16" height="16" style="position:absolute;left:0;top:0"><rect x="0.5" y="0.5" width="15" height="15" fill="#e9f8ff" stroke="#2f62d0"/><rect x="1" y="1" width="14" height="2" fill="url(#fg)"/><path d="M11.5 4.2 q-2-0.6-2.8 1.2 l-2 7 q-0.6 1.8-2.6 1.2" fill="none" stroke="#1a1a40" stroke-width="1.3"/><path d="M6.3 7.3h4" stroke="#1a1a40" stroke-width="1.1"/></svg></i><span style="letter-spacing:-0.6px">sub_180001520</span></div>
    <div style="top:529px;background:transparent"><i class="fi2"><svg width="16" height="16" style="position:absolute;left:0;top:0"><rect x="0.5" y="0.5" width="15" height="15" fill="#e9f8ff" stroke="#2f62d0"/><rect x="1" y="1" width="14" height="2" fill="url(#fg)"/><path d="M11.5 4.2 q-2-0.6-2.8 1.2 l-2 7 q-0.6 1.8-2.6 1.2" fill="none" stroke="#1a1a40" stroke-width="1.3"/><path d="M6.3 7.3h4" stroke="#1a1a40" stroke-width="1.1"/></svg></i><span style="letter-spacing:-0.6px">sub_180001570</span></div>
    <div style="top:546px;background:transparent"><i class="fi2"><svg width="16" height="16" style="position:absolute;left:0;top:0"><rect x="0.5" y="0.5" width="15" height="15" fill="#e9f8ff" stroke="#2f62d0"/><rect x="1" y="1" width="14" height="2" fill="url(#fg)"/><path d="M11.5 4.2 q-2-0.6-2.8 1.2 l-2 7 q-0.6 1.8-2.6 1.2" fill="none" stroke="#1a1a40" stroke-width="1.3"/><path d="M6.3 7.3h4" stroke="#1a1a40" stroke-width="1.1"/></svg></i><span style="letter-spacing:-0.6px">sub_180001720</span></div>
    <div style="top:563px;background:transparent"><i class="fi2"><svg width="16" height="16" style="position:absolute;left:0;top:0"><rect x="0.5" y="0.5" width="15" height="15" fill="#e9f8ff" stroke="#2f62d0"/><rect x="1" y="1" width="14" height="2" fill="url(#fg)"/><path d="M11.5 4.2 q-2-0.6-2.8 1.2 l-2 7 q-0.6 1.8-2.6 1.2" fill="none" stroke="#1a1a40" stroke-width="1.3"/><path d="M6.3 7.3h4" stroke="#1a1a40" stroke-width="1.1"/></svg></i><span style="letter-spacing:-0.6px">sub_180001850</span></div>
    <div style="top:580px;background:transparent"><i class="fi2"><svg width="16" height="16" style="position:absolute;left:0;top:0"><rect x="0.5" y="0.5" width="15" height="15" fill="#e9f8ff" stroke="#2f62d0"/><rect x="1" y="1" width="14" height="2" fill="url(#fg)"/><path d="M11.5 4.2 q-2-0.6-2.8 1.2 l-2 7 q-0.6 1.8-2.6 1.2" fill="none" stroke="#1a1a40" stroke-width="1.3"/><path d="M6.3 7.3h4" stroke="#1a1a40" stroke-width="1.1"/></svg></i><span style="letter-spacing:-0.6px">sub_180001F10</span></div>
    <div style="top:597px;background:transparent"><i class="fi2"><svg width="16" height="16" style="position:absolute;left:0;top:0"><rect x="0.5" y="0.5" width="15" height="15" fill="#e9f8ff" stroke="#2f62d0"/><rect x="1" y="1" width="14" height="2" fill="url(#fg)"/><path d="M11.5 4.2 q-2-0.6-2.8 1.2 l-2 7 q-0.6 1.8-2.6 1.2" fill="none" stroke="#1a1a40" stroke-width="1.3"/><path d="M6.3 7.3h4" stroke="#1a1a40" stroke-width="1.1"/></svg></i><span style="letter-spacing:-0.6px">sub_180001F30</span></div>
    <div style="top:614px;background:transparent"><i class="fi2"><svg width="16" height="16" style="position:absolute;left:0;top:0"><rect x="0.5" y="0.5" width="15" height="15" fill="#e9f8ff" stroke="#2f62d0"/><rect x="1" y="1" width="14" height="2" fill="url(#fg)"/><path d="M11.5 4.2 q-2-0.6-2.8 1.2 l-2 7 q-0.6 1.8-2.6 1.2" fill="none" stroke="#1a1a40" stroke-width="1.3"/><path d="M6.3 7.3h4" stroke="#1a1a40" stroke-width="1.1"/></svg></i><span style="letter-spacing:-0.6px">sub_180002060</span></div>
    <div style="top:631px;background:transparent"><i class="fi2"><svg width="16" height="16" style="position:absolute;left:0;top:0"><rect x="0.5" y="0.5" width="15" height="15" fill="#e9f8ff" stroke="#2f62d0"/><rect x="1" y="1" width="14" height="2" fill="url(#fg)"/><path d="M11.5 4.2 q-2-0.6-2.8 1.2 l-2 7 q-0.6 1.8-2.6 1.2" fill="none" stroke="#1a1a40" stroke-width="1.3"/><path d="M6.3 7.3h4" stroke="#1a1a40" stroke-width="1.1"/></svg></i><span style="letter-spacing:-0.6px">sub_1800021A0</span></div>
    <div style="top:648px;background:transparent"><i class="fi2"><svg width="16" height="16" style="position:absolute;left:0;top:0"><rect x="0.5" y="0.5" width="15" height="15" fill="#e9f8ff" stroke="#2f62d0"/><rect x="1" y="1" width="14" height="2" fill="url(#fg)"/><path d="M11.5 4.2 q-2-0.6-2.8 1.2 l-2 7 q-0.6 1.8-2.6 1.2" fill="none" stroke="#1a1a40" stroke-width="1.3"/><path d="M6.3 7.3h4" stroke="#1a1a40" stroke-width="1.1"/></svg></i><span style="letter-spacing:-0.6px">sub_180002270</span></div>
    <div style="top:665px;background:transparent"><i class="fi2"><svg width="16" height="16" style="position:absolute;left:0;top:0"><rect x="0.5" y="0.5" width="15" height="15" fill="#e9f8ff" stroke="#2f62d0"/><rect x="1" y="1" width="14" height="2" fill="url(#fg)"/><path d="M11.5 4.2 q-2-0.6-2.8 1.2 l-2 7 q-0.6 1.8-2.6 1.2" fill="none" stroke="#1a1a40" stroke-width="1.3"/><path d="M6.3 7.3h4" stroke="#1a1a40" stroke-width="1.1"/></svg></i><span style="letter-spacing:-0.6px">sub_180002380</span></div>
    <div style="top:682px;background:transparent"><i class="fi2"><svg width="16" height="16" style="position:absolute;left:0;top:0"><rect x="0.5" y="0.5" width="15" height="15" fill="#e9f8ff" stroke="#2f62d0"/><rect x="1" y="1" width="14" height="2" fill="url(#fg)"/><path d="M11.5 4.2 q-2-0.6-2.8 1.2 l-2 7 q-0.6 1.8-2.6 1.2" fill="none" stroke="#1a1a40" stroke-width="1.3"/><path d="M6.3 7.3h4" stroke="#1a1a40" stroke-width="1.1"/></svg></i><span style="letter-spacing:-0.6px">sub_180002410</span></div>
    <div style="top:699px;background:transparent"><i class="fi2"><svg width="16" height="16" style="position:absolute;left:0;top:0"><rect x="0.5" y="0.5" width="15" height="15" fill="#e9f8ff" stroke="#2f62d0"/><rect x="1" y="1" width="14" height="2" fill="url(#fg)"/><path d="M11.5 4.2 q-2-0.6-2.8 1.2 l-2 7 q-0.6 1.8-2.6 1.2" fill="none" stroke="#1a1a40" stroke-width="1.3"/><path d="M6.3 7.3h4" stroke="#1a1a40" stroke-width="1.1"/></svg></i><span style="letter-spacing:-0.6px">sub_1800024B0</span></div>
    <div style="top:716px;background:transparent"><i class="fi2"><svg width="16" height="16" style="position:absolute;left:0;top:0"><rect x="0.5" y="0.5" width="15" height="15" fill="#e9f8ff" stroke="#2f62d0"/><rect x="1" y="1" width="14" height="2" fill="url(#fg)"/><path d="M11.5 4.2 q-2-0.6-2.8 1.2 l-2 7 q-0.6 1.8-2.6 1.2" fill="none" stroke="#1a1a40" stroke-width="1.3"/><path d="M6.3 7.3h4" stroke="#1a1a40" stroke-width="1.1"/></svg></i><span style="letter-spacing:-0.6px">sub_180002540</span></div>
    <div style="top:733px;background:#e0ffff"><i class="fi2"><svg width="16" height="16" style="position:absolute;left:0;top:0"><rect x="0.5" y="0.5" width="15" height="15" fill="#e9f8ff" stroke="#2f62d0"/><rect x="1" y="1" width="14" height="2" fill="url(#fg)"/><path d="M11.5 4.2 q-2-0.6-2.8 1.2 l-2 7 q-0.6 1.8-2.6 1.2" fill="none" stroke="#1a1a40" stroke-width="1.3"/><path d="M6.3 7.3h4" stroke="#1a1a40" stroke-width="1.1"/></svg></i><span style="font-weight:bold;letter-spacing:-0.48px">__security_check_cookie</span></div>
    <div style="top:750px;background:#e0ffff"><i class="fi2"><svg width="16" height="16" style="position:absolute;left:0;top:0"><rect x="0.5" y="0.5" width="15" height="15" fill="#e9f8ff" stroke="#2f62d0"/><rect x="1" y="1" width="14" height="2" fill="url(#fg)"/><path d="M11.5 4.2 q-2-0.6-2.8 1.2 l-2 7 q-0.6 1.8-2.6 1.2" fill="none" stroke="#1a1a40" stroke-width="1.3"/><path d="M6.3 7.3h4" stroke="#1a1a40" stroke-width="1.1"/></svg></i><span style="letter-spacing:0px">std::exception::exception(char const *)</span></div>
    <div style="top:767px;background:#e0ffff"><i class="fi2"><svg width="16" height="16" style="position:absolute;left:0;top:0"><rect x="0.5" y="0.5" width="15" height="15" fill="#e9f8ff" stroke="#2f62d0"/><rect x="1" y="1" width="14" height="2" fill="url(#fg)"/><path d="M11.5 4.2 q-2-0.6-2.8 1.2 l-2 7 q-0.6 1.8-2.6 1.2" fill="none" stroke="#1a1a40" stroke-width="1.3"/><path d="M6.3 7.3h4" stroke="#1a1a40" stroke-width="1.1"/></svg></i><span style="letter-spacing:0px">std::exception::exception(char const *,int)</span></div>
    <div style="top:784px;background:#e0ffff"><i class="fi2"><svg width="16" height="16" style="position:absolute;left:0;top:0"><rect x="0.5" y="0.5" width="15" height="15" fill="#e9f8ff" stroke="#2f62d0"/><rect x="1" y="1" width="14" height="2" fill="url(#fg)"/><path d="M11.5 4.2 q-2-0.6-2.8 1.2 l-2 7 q-0.6 1.8-2.6 1.2" fill="none" stroke="#1a1a40" stroke-width="1.3"/><path d="M6.3 7.3h4" stroke="#1a1a40" stroke-width="1.1"/></svg></i><span style="letter-spacing:0px">std::exception::exception(std::exception const &)</span></div>
  </div>
  <!-- vertical scrollbar functions -->
  <div class="a" style="left:225px;top:132px;width:16px;height:664px;background:#f0f0f0"></div>
  <div class="a" style="left:225px;top:149px;width:16px;height:69px;background:#cdcdcd"></div>
  <div class="a" style="left:228px;top:178px;width:9px;height:10px;background:#f0f0f0"></div>
  <svg class="a" style="left:225px;top:134px" width="16" height="12"><path d="M4 8 l4-4 4 4" fill="none" stroke="#606060" stroke-width="1.8"/></svg>
  <svg class="a" style="left:225px;top:782px" width="16" height="12"><path d="M4 4 l4 4 4-4" fill="none" stroke="#606060" stroke-width="1.8"/></svg>
  <!-- horizontal scrollbar -->
  <div class="a" style="left:9px;top:796px;width:232px;height:16px;background:#f0f0f0"></div>
  <div class="a" style="left:26px;top:796px;width:35px;height:16px;background:#cdcdcd"></div>
  <div class="a" style="left:37px;top:800px;width:11px;height:8px;background:#f0f0f0"></div>
  <svg class="a" style="left:10px;top:796px" width="16" height="16"><path d="M10 4 l-4 4 4 4" fill="none" stroke="#606060" stroke-width="1.8"/></svg>
  <svg class="a" style="left:206px;top:796px" width="16" height="16"><path d="M6 4 l4 4 -4 4" fill="none" stroke="#606060" stroke-width="1.8"/></svg>
  <div class="t" style="left:13px;top:816px;color:#000;letter-spacing:-0.3px">Line 21 of 341</div>

  <!-- code view -->
  <div class="a" style="left:245px;top:129px;width:938px;height:2px;background:#7a8590"></div>
  <div class="a" style="left:245px;top:131px;width:921px;height:683px;background:#fff"></div>
  <div class="a" style="left:293px;top:131px;width:1px;height:683px;background:#a0a0a0"></div>
  <div class="a" style="left:1166px;top:131px;width:16px;height:683px;background:#f0f0f0"></div>
  <div class="a" style="left:1182px;top:131px;width:1px;height:703px;background:#a0a0a0"></div>
  <div class="a" style="left:1166px;top:467px;width:16px;height:92px;background:#cdcdcd"></div>
  <div class="a" style="left:1169px;top:508px;width:9px;height:10px;background:#f0f0f0"></div>
  <svg class="a" style="left:1166px;top:133px" width="16" height="12"><path d="M4 8 l4-4 4 4" fill="none" stroke="#606060" stroke-width="1.8"/></svg>
  <svg class="a" style="left:1166px;top:818px" width="16" height="12"><path d="M4 4 l4 4 4-4" fill="none" stroke="#606060" stroke-width="1.8"/></svg>
  <div class="a" style="left:245px;top:814px;width:48px;height:20px;background:#fff"></div>
  <div class="a" style="left:293px;top:814px;width:873px;height:20px;background:#f0f0f0;border-left:1px solid #a0a0a0"></div>
  <div class="a m" style="left:295px;top:816px;font-size:12px;line-height:16px;color:#000;white-space:pre;letter-spacing:-0.3px">00000CAC</div>
  <div class="a" style="left:352px;top:815px;width:1px;height:18px;background:#d0d0d0"></div>
  <div class="a m" style="left:357px;top:816px;font-size:12px;line-height:16px;color:#000;white-space:pre;letter-spacing:-0.3px">sub_180001850:164</div>
  <div class="a" style="left:477px;top:815px;width:1px;height:18px;background:#d0d0d0"></div>
  <div class="a" style="left:490px;top:815px;width:1px;height:18px;background:#d0d0d0"></div>
  <div class="a" style="left:248px;top:108px;width:113px;height:22px;background:#f0f0f0;border:1px solid #d9d9d9;border-bottom:none"></div>
  <svg class="a" style="left:257px;top:110px" width="17" height="17"><rect x="0.5" y="0.5" width="11" height="13" fill="#f0f8ff" stroke="#2f66c8"/><rect x="1" y="1" width="10" height="2" fill="url(#fg)"/><rect x="5.5" y="3.5" width="10" height="12" fill="#fff" stroke="#1f4a90"/><path d="M7 6.5h3M9 8.5h5M7 10.5h3M9 12.5h5" stroke="#334" stroke-width="0.9"/></svg>
  <div class="t" style="left:276px;top:111px;color:#000;letter-spacing:-0.7px">IDA View-A</div>
  <div class="a" style="left:335px;top:112px;width:14px;height:14px;border-radius:2px;background:#c4c4c4;border:1px solid #b0b0b0"></div><svg class="a" style="left:335px;top:112px" width="14" height="14"><path d="M3.5 3.5l7 7M10.5 3.5l-7 7" stroke="#fff" stroke-width="2"/></svg>
  <div class="a" style="left:361px;top:107px;width:136px;height:23px;background:#ffffff;border:1px solid #d9d9d9;border-bottom:none"></div>
  <svg class="a" style="left:375px;top:109px" width="17" height="17"><rect x="0.5" y="0.5" width="11" height="13" fill="#f0f8ff" stroke="#2f66c8"/><rect x="1" y="1" width="10" height="2" fill="url(#fg)"/><rect x="5.5" y="3.5" width="10" height="12" fill="#fff" stroke="#1f4a90"/><path d="M7 6.5h3M9 8.5h5M7 10.5h3M9 12.5h5" stroke="#334" stroke-width="0.9"/></svg>
  <div class="t" style="left:394px;top:110px;color:#000;letter-spacing:-0.8px">Pseudocode-A</div>
  <div class="a" style="left:468px;top:112px;width:14px;height:14px;border-radius:2px;background:#e04a2a;border:1px solid #c03a1a"></div><svg class="a" style="left:468px;top:112px" width="14" height="14"><path d="M3.5 3.5l7 7M10.5 3.5l-7 7" stroke="#fff" stroke-width="2"/></svg>
  <div class="a" style="left:497px;top:108px;width:135px;height:22px;background:#f0f0f0;border:1px solid #d9d9d9;border-bottom:none"></div>
  <svg class="a" style="left:508px;top:110px" width="16" height="16"><rect x="0.5" y="0.5" width="14" height="14" fill="#fff" stroke="#2f6fd0"/><rect x="1" y="1" width="13" height="2" fill="#3a9af0"/><text x="2" y="12.5" font-family="Liberation Serif" font-size="11" font-weight="bold" fill="#2a8a2a">‘s’</text></svg>
  <div class="t" style="left:527px;top:111px;color:#000;letter-spacing:-0.62px">Strings window</div>
  <div class="a" style="left:604px;top:112px;width:14px;height:14px;border-radius:2px;background:#c4c4c4;border:1px solid #b0b0b0"></div><svg class="a" style="left:604px;top:112px" width="14" height="14"><path d="M3.5 3.5l7 7M10.5 3.5l-7 7" stroke="#fff" stroke-width="2"/></svg>
  <div class="a" style="left:632px;top:108px;width:118px;height:22px;background:#f0f0f0;border:1px solid #d9d9d9;border-bottom:none"></div>
  <svg class="a" style="left:645px;top:110px" width="16" height="16"><rect x="0.5" y="0.5" width="14" height="14" fill="#fff" stroke="#2f6fd0"/><rect x="1" y="1" width="13" height="2" fill="#3a9af0"/><path d="M7.5 4.5 l4 2.2 v4.6 l-4 2.2 -4-2.2 v-4.6z" fill="#e8f0ff" stroke="#2a3ad0" stroke-width="1.1"/></svg>
  <div class="t" style="left:663px;top:111px;color:#000;letter-spacing:-0.7px">Hex View-1</div>
  <div class="a" style="left:723px;top:112px;width:14px;height:14px;border-radius:2px;background:#c4c4c4;border:1px solid #b0b0b0"></div><svg class="a" style="left:723px;top:112px" width="14" height="14"><path d="M3.5 3.5l7 7M10.5 3.5l-7 7" stroke="#fff" stroke-width="2"/></svg>
  <div class="a" style="left:750px;top:108px;width:113px;height:22px;background:#f0f0f0;border:1px solid #d9d9d9;border-bottom:none"></div>
  <svg class="a" style="left:762px;top:110px" width="16" height="16"><rect x="0.5" y="0.5" width="14" height="14" fill="#fff" stroke="#2f6fd0"/><rect x="1" y="1" width="13" height="2" fill="#3a9af0"/><path d="M4 13 l3.5-8.5 3.5 8.5 M5.3 10h4.4" fill="none" stroke="#203a80" stroke-width="1.3"/><circle cx="7.5" cy="4.5" r="1" fill="#203a80"/></svg>
  <div class="t" style="left:781px;top:111px;color:#000;letter-spacing:-0.47px">Structures</div>
  <div class="a" style="left:837px;top:112px;width:14px;height:14px;border-radius:2px;background:#c4c4c4;border:1px solid #b0b0b0"></div><svg class="a" style="left:837px;top:112px" width="14" height="14"><path d="M3.5 3.5l7 7M10.5 3.5l-7 7" stroke="#fff" stroke-width="2"/></svg>
  <div class="a" style="left:863px;top:108px;width:95px;height:22px;background:#f0f0f0;border:1px solid #d9d9d9;border-bottom:none"></div>
  <svg class="a" style="left:875px;top:110px" width="16" height="16"><rect x="0.5" y="0.5" width="14" height="14" fill="#fff" stroke="#2f6fd0"/><rect x="1" y="1" width="13" height="2" fill="#3a9af0"/><g fill="#2a5ab0"><rect x="3" y="5" width="2" height="2"/><rect x="3" y="8.5" width="2" height="2"/><rect x="3" y="12" width="2" height="2"/></g><path d="M6 6h6M6 9.5h6M6 13h6" stroke="#555" stroke-width="1"/></svg>
  <div class="t" style="left:895px;top:111px;color:#000;letter-spacing:-1.0px">Enums</div>
  <div class="a" style="left:931px;top:112px;width:14px;height:14px;border-radius:2px;background:#c4c4c4;border:1px solid #b0b0b0"></div><svg class="a" style="left:931px;top:112px" width="14" height="14"><path d="M3.5 3.5l7 7M10.5 3.5l-7 7" stroke="#fff" stroke-width="2"/></svg>
  <div class="a" style="left:958px;top:108px;width:101px;height:22px;background:#f0f0f0;border:1px solid #d9d9d9;border-bottom:none"></div>
  <svg class="a" style="left:971px;top:110px" width="16" height="16"><rect x="0.5" y="0.5" width="14" height="14" fill="#fff" stroke="#2f6fd0"/><rect x="1" y="1" width="13" height="2" fill="#3a9af0"/><path d="M7 5h5M8 8h5M8 11h5M8 13.5h5" stroke="#203a80"/><path d="M1.5 7 l3-3 v2 h2.5 v2 h-2.5 v2z" fill="#20a020"/></svg>
  <div class="t" style="left:990px;top:111px;color:#000;letter-spacing:-0.43px">Imports</div>
  <div class="a" style="left:1032px;top:112px;width:14px;height:14px;border-radius:2px;background:#c4c4c4;border:1px solid #b0b0b0"></div><svg class="a" style="left:1032px;top:112px" width="14" height="14"><path d="M3.5 3.5l7 7M10.5 3.5l-7 7" stroke="#fff" stroke-width="2"/></svg>
  <div class="a" style="left:1059px;top:108px;width:100px;height:22px;background:#f0f0f0;border:1px solid #d9d9d9;border-bottom:none"></div>
  <svg class="a" style="left:1071px;top:110px" width="16" height="16"><rect x="0.5" y="0.5" width="14" height="14" fill="#fff" stroke="#2f6fd0"/><rect x="1" y="1" width="13" height="2" fill="#3a9af0"/><path d="M3 6h5M3 9h5M3 12h5" stroke="#203a80"/><path d="M13.5 7 l-3-3 v2 h-3 v2 h3 v2z" fill="#20a020"/></svg>
  <div class="t" style="left:1091px;top:111px;color:#000;letter-spacing:-0.53px">Exports</div>
  <div class="a" style="left:1133px;top:112px;width:14px;height:14px;border-radius:2px;background:#c4c4c4;border:1px solid #b0b0b0"></div><svg class="a" style="left:1133px;top:112px" width="14" height="14"><path d="M3.5 3.5l7 7M10.5 3.5l-7 7" stroke="#fff" stroke-width="2"/></svg>
  <div class="dot" style="top:134px"></div>
  <div class="dot" style="top:150px"></div>
  <div class="dot" style="top:166px"></div>
  <div class="dot" style="top:182px"></div>
  <div class="dot" style="top:198px"></div>
  <div class="dot" style="top:214px"></div>
  <div class="dot" style="top:230px"></div>
  <div class="dot" style="top:246px"></div>
  <div class="dot" style="top:262px"></div>
  <div class="dot" style="top:278px"></div>
  <div class="dot" style="top:294px"></div>
  <div class="dot" style="top:310px"></div>
  <div class="dot" style="top:326px"></div>
  <div class="dot" style="top:342px"></div>
  <div class="dot" style="top:358px"></div>
  <div class="dot" style="top:374px"></div>
  <div id="ln">140
141
142
143
144
145
146
147
148
149
150
151
152
153
154
155
156
157
158
159
160
161
162
163
164
165
166
167
168
169
170
171
172
173
174
175
176
177
178
179
180
181
</div>
  <div id="code"><div><b class="f">nativeInit</b>(0xD80958FC74E988A6ui64);</div><div><b class="v">v12</b> = <i class="ast">*</i>(<b class="g">_DWORD <i class="ast">*</i></b>)<b class="f">nativeCall</b>();</div><div><b class="f">nativeInit</b>(0xBB062B2B5722478Eui64);</div><div><b class="v">v25</b> = 0i64;</div><div><b class="b">LODWORD</b>(<b class="v">v25</b>) = <b class="v">v12</b>;</div><div><b class="f">nativePush64</b>(<b class="v">v25</b>);</div><div>if ( <i class="ast">*</i>(<b class="g">_DWORD <i class="ast">*</i></b>)<b class="f">nativeCall</b>() )</div><div>  <b class="b">sub_180001720</b>();</div><div><b class="f">nativeInit</b>(<b class="y">0xD95E79E8686D2C27ui64</b>);</div><div><b class="v">v26</b> = 0i64;</div><div><b class="b">LODWORD</b>(<b class="v">v26</b>) = 2;</div><div><b class="f">nativePush64</b>(<b class="v">v26</b>);</div><div><b class="v">v27</b> = 0i64;</div><div><b class="b">LODWORD</b>(<b class="v">v27</b>) = 1;</div><div><b class="f">nativePush64</b>(<b class="v">v27</b>);</div><div>if ( <i class="ast">*</i>(<b class="g">_DWORD <i class="ast">*</i></b>)<b class="f">nativeCall</b>() != 127</div><div>  || (<b class="f">nativeInit</b>(<b class="y">0xD95E79E8686D2C27ui64</b>),</div><div>      <b class="v">v28</b> = 0i64,</div><div>      <b class="b">LODWORD</b>(<b class="v">v28</b>) = 2,</div><div>      <b class="f">nativePush64</b>(<b class="v">v28</b>),</div><div>      <b class="v">v29</b> = 0i64,</div><div>      <b class="b">LODWORD</b>(<b class="v">v29</b>) = 2,</div><div>      <b class="f">nativePush64</b>(<b class="v">v29</b>),</div><div>      <i class="ast">*</i>(<b class="g">_DWORD <i class="ast">*</i></b>)<b class="f">nativeCall</b>() != 127)</div><div>  || (<b class="f">nativeInit</b>(<b class="y">0xD95E79E8686D2C<i class="cur"></i>27ui64</b>),</div><div>      <b class="v">v30</b> = 0i64,</div><div>      <b class="b">LODWORD</b>(<b class="v">v30</b>) = 2,</div><div>      <b class="f">nativePush64</b>(<b class="v">v30</b>),</div><div>      <b class="v">v31</b> = 0i64,</div><div>      <b class="b">LODWORD</b>(<b class="v">v31</b>) = 3,</div><div>      <b class="f">nativePush64</b>(<b class="v">v31</b>),</div><div>      <i class="ast">*</i>(<b class="g">_DWORD <i class="ast">*</i></b>)<b class="f">nativeCall</b>() != 127)</div><div>  || (<b class="f">nativeInit</b>(<b class="y">0xD95E79E8686D2C27ui64</b>),</div><div>      <b class="v">v32</b> = 0i64,</div><div>      <b class="b">LODWORD</b>(<b class="v">v32</b>) = 2,</div><div>      <b class="f">nativePush64</b>(<b class="v">v32</b>),</div><div>      <b class="v">v33</b> = 0i64,</div><div>      <b class="b">LODWORD</b>(<b class="v">v33</b>) = 4,</div><div>      <b class="f">nativePush64</b>(<b class="v">v33</b>),</div><div>      <i class="ast">*</i>(<b class="g">_DWORD <i class="ast">*</i></b>)<b class="f">nativeCall</b>() != 127)</div><div>  || <b class="b">sub_1800011B0</b>(<b class="v">v13</b>, 5i64) != 127</div><div>  || <b class="b">sub_1800011B0</b>(<b class="v">v14</b>, 6i64) != 127 )</div></div>

  <!-- output window -->
  <div class="a" style="left:8px;top:834px;width:1175px;height:3px;background:#f0f0f0"></div>
  <div class="a" style="left:8px;top:837px;width:1175px;height:1px;background:#c8c8c8"></div>
  <div class="a" style="left:8px;top:838px;width:1175px;height:21px;background:#f0f0f0;border-bottom:1px solid #c8c8c8"></div>
  <svg class="a" style="left:14px;top:840px" width="14" height="17"><rect x="0.5" y="0.5" width="13" height="16" fill="#fff" stroke="#3a6ab8"/><rect x="0.5" y="0.5" width="13" height="2" fill="#3aa0f0"/><path d="M3 6h8M3 8.5h8M3 11h8M3 13.5h8" stroke="#555"/></svg>
  <div class="t" style="left:33px;top:841px;color:#000;letter-spacing:-0.5px">Output window</div>
  <svg class="a" style="left:1115px;top:842px" width="62" height="14">
    <rect x="5.5" y="1.5" width="9" height="9" fill="none" stroke="#000" stroke-width="1.4"/><rect x="5" y="1" width="10" height="2.5" fill="#000"/>
    <rect x="30.5" y="1.5" width="6" height="5" fill="none" stroke="#000" stroke-width="1.3"/>
    <rect x="28.5" y="4.5" width="6" height="5" fill="#f0f0f0" stroke="#000" stroke-width="1.3"/>
    <path d="M50.5 2 l8 8 M58.5 2 l-8 8" stroke="#000" stroke-width="1.5"/>
  </svg>
  <div class="a" style="left:8px;top:862px;width:1174px;height:22px;background:#fff;border-top:2px solid #8c8c8c;border-bottom:1px solid #9a9a9a;overflow:hidden">
    <div class="a m" style="left:5px;top:-12px;font-size:13.333px;font-weight:bold;line-height:16px;color:#000;white-space:pre">18001CCD0: using guessed type int dword_18001CCD0;
18001CCE4: using guessed type int dword_18001CCE4;</div>
  </div>
  <div class="a" style="left:1166px;top:864px;width:16px;height:19px;background:#f0f0f0"></div>
  <svg class="a" style="left:1166px;top:864px" width="16" height="20"><path d="M4.5 7 l3.5-3.5 3.5 3.5M4.5 12 l3.5 3.5 3.5-3.5" fill="none" stroke="#606060" stroke-width="2"/></svg>
  <div class="a" style="left:293px;top:833px;width:890px;height:1px;background:#a0a0a0"></div>
  <div class="a" style="left:8px;top:884px;width:1175px;height:46px;background:#f0f0f0"></div>
  <div class="a" style="left:10px;top:886px;width:45px;height:22px;background:#e1e1e1;border:1px solid #adadad"></div>
  <div class="t" style="left:15px;top:889px;color:#000;letter-spacing:-0.55px">Python</div>
  <div class="a" style="left:60px;top:885px;width:1122px;height:24px;background:#fff;border:1px solid #7a7a7a"></div>
  <div class="a m" style="left:10px;top:913px;font-size:11.5px;line-height:16px;color:#000;white-space:pre">AU:  idle</div>
  <div class="a" style="left:88px;top:911px;width:1px;height:17px;background:#d7d7d7"></div>
  <div class="a m" style="left:93px;top:913px;font-size:11.5px;line-height:16px;color:#000;white-space:pre">Down</div>
  <div class="a" style="left:164px;top:911px;width:1px;height:17px;background:#d7d7d7"></div>
  <div class="a m" style="left:169px;top:913px;font-size:11.5px;line-height:16px;color:#000;white-space:pre">Disk: 12GB</div>
  <div class="a" style="left:240px;top:911px;width:1px;height:17px;background:#d7d7d7"></div>
  <svg class="a" style="left:1169px;top:917px" width="12" height="12"><g fill="#b0b0b0"><rect x="9" y="1" width="2" height="2"/><rect x="6" y="4" width="2" height="2"/><rect x="9" y="4" width="2" height="2"/><rect x="3" y="7" width="2" height="2"/><rect x="6" y="7" width="2" height="2"/><rect x="9" y="7" width="2" height="2"/></g></svg>
  <!-- icons -->
  <svg class="a" style="left:0;top:0" width="1184" height="52">
    <!-- open folder -->
    <path d="M20 36 l2-2 h5 l1 2 h6 v3 h-14z" fill="#e0b030"/>
    <path d="M21 47 l2-8 h14 l-2 8z" fill="#f6d64a" stroke="#c8961c" stroke-width="1"/>
    <path d="M28 34 q3-4 7-3 v-2 l3 3-3 3 v-2 q-4 0-7 1z" fill="#1f6be0"/>
    <!-- save -->
    <path d="M45.5 31.5h14v15h-12.5l-1.5-1.5z" fill="#7a30d8" stroke="#5a1ab0"/>
    <rect x="47.5" y="32.5" width="10" height="5" fill="#f4e6ea"/>
    <rect x="48" y="41" width="7" height="5" fill="#e6e6f6"/>
    <rect x="49" y="42" width="1.5" height="3" fill="#6020b0"/>
    <!-- back arrow -->
    <path d="M80.5 38.5 l5.5-5.5 v3.5 h7.5 v4 h-7.5 v3.5z" fill="#1a8ae8" stroke="#0a2ab0" stroke-width="0.9"/>
    <path d="M101 37 h7 l-3.5 4z" fill="#222"/>
    <!-- forward arrow -->
    <path d="M128.5 38.5 l-5.5-5.5 v3.5 h-7.5 v4 h7.5 v3.5z" fill="#b0b0b0" stroke="#808080" stroke-width="0.9"/>
    <path d="M137 37 h7 l-3.5 4z" fill="#8a8a8a"/>
    <!-- binoculars -->
    <g><path d="M162 31h3v2h1v2h1v6h-6v-6h1v-2z" fill="#2350a8"/><path d="M167 31h3v2h1v2h1v6h-6v-6h1v-2z" fill="#2350a8"/><rect x="162" y="36" width="2" height="4" fill="#8fc8ff"/><rect x="168" y="36" width="2" height="4" fill="#8fc8ff"/><rect x="163" y="33" width="2" height="1" fill="#9ac"/><rect x="168" y="33" width="2" height="1" fill="#9ac"/></g><rect x="167.5" y="37.5" width="9" height="9" fill="#fff" stroke="#2b5a9a"/><path d="M170 40v5M173 40v5M169 41.5h6M169 44h6" stroke="#0a2a60" stroke-width="1.3"/><g><path d="M185 31h3v2h1v2h1v6h-6v-6h1v-2z" fill="#2350a8"/><path d="M190 31h3v2h1v2h1v6h-6v-6h1v-2z" fill="#2350a8"/><rect x="185" y="36" width="2" height="4" fill="#8fc8ff"/><rect x="191" y="36" width="2" height="4" fill="#8fc8ff"/><rect x="186" y="33" width="2" height="1" fill="#9ac"/><rect x="191" y="33" width="2" height="1" fill="#9ac"/></g><rect x="190.5" y="36.5" width="9" height="10" fill="#f0f8ff" stroke="#2b5a9a"/><path d="M192 39h6M195 39v7M194 45.5h2" stroke="#0a2a60" stroke-width="1.6"/><g><path d="M208 31h3v2h1v2h1v6h-6v-6h1v-2z" fill="#2350a8"/><path d="M213 31h3v2h1v2h1v6h-6v-6h1v-2z" fill="#2350a8"/><rect x="208" y="36" width="2" height="4" fill="#8fc8ff"/><rect x="214" y="36" width="2" height="4" fill="#8fc8ff"/><rect x="209" y="33" width="2" height="1" fill="#9ac"/><rect x="214" y="33" width="2" height="1" fill="#9ac"/></g><rect x="210.5" y="39.5" width="12" height="7" fill="#fff" stroke="#2b5a9a"/><text x="211.5" y="45.5" font-family="Liberation Sans" font-size="6.5" font-weight="bold" fill="#0a2a60">101</text><g fill="#999"><path d="M238 31h3v2h1v2h1v6h-6v-6h1v-2z"/><path d="M243 31h3v2h1v2h1v6h-6v-6h1v-2z"/><path d="M241 39 h6 v-3 l5 5 -5 5 v-3 h-6z" fill="#aaa" stroke="#888" stroke-width="0.6"/></g>
    <!-- blue down arrow -->
    <path d="M270 31 q6 0 6 6 v4 h4 l-6 7 -6-7 h4 v-4 q0-3-2-4z" fill="#1a72f0"/>
    <!-- yellow lock -->
    <path d="M294 47 l10-12 5 3 -9 9z" fill="#f3c11d"/>
    <path d="M295 46 l3 1 -2 1z" fill="#222"/>
    <rect x="303" y="40" width="8" height="7" fill="#6a98c8" stroke="#456"/>
    <path d="M304.5 40 v-2 a2.5 2.5 0 0 1 5 0 v2" fill="none" stroke="#555" stroke-width="1.2"/>
    <!-- red triangle window -->
    <rect x="328.5" y="31.5" width="15" height="15" fill="#fff" stroke="#1f66c8"/>
    <rect x="329" y="32" width="14" height="2" fill="#3a8af0"/>
    <path d="M336 35 l6 10 h-12z" fill="#d51818"/>
    <rect x="335.5" y="38" width="1.2" height="4" fill="#fff"/>
    <!-- green circle -->
    <circle cx="360" cy="39" r="7.5" fill="#2fb52f" stroke="#1b7d1b"/>
    <circle cx="358" cy="36" r="3" fill="#8fe48f" opacity="0.7"/>
    <!-- code+ etc (gray) -->
    <g fill="#808080">
      <rect x="387.5" y="38.5" width="15" height="8" fill="#fff" stroke="#999"/>
      <text x="388.5" y="45.5" font-family="Liberation Sans" font-size="7.5" font-weight="bold" fill="#666" textLength="13.5" lengthAdjust="spacingAndGlyphs">CODE</text>
      <path d="M395 31 h3 v3 h3 v3 h-3 v3 h-3 v-3 h-3 v-3 h3z"/>
      <rect x="410" y="38" width="15" height="9" fill="#777"/>
      <text x="411" y="45.5" font-family="Liberation Sans" font-size="7.5" font-weight="bold" fill="#e8e8e8" textLength="13" lengthAdjust="spacingAndGlyphs">DATA</text>
      <path d="M418 31 h3 v3 h3 v3 h-3 v3 h-3 v-3 h-3 v-3 h3z"/>
      <rect x="433.5" y="35.5" width="10" height="11" fill="#fff" stroke="#aaa"/>
      <text x="434.5" y="45" font-family="Liberation Sans" font-size="9" fill="#777">A</text>
      <path d="M441 31 h3 v3 h3 v3 h-3 v3 h-3 v-3 h-3 v-3 h3z"/>
      <text x="456" y="47" font-family="Liberation Serif" font-size="11" font-weight="bold" fill="#888">‘s’</text>
      <path d="M464 31 h3 v3 h3 v3 h-3 v3 h-3 v-3 h-3 v-3 h3z"/>
      <path d="M478 37 h7 l-3.5 4z" fill="#555"/>
      <path d="M496 38 l1 3 3-1 -2 3 2 3 -3-1 -1 3 -1-3 -3 1 2-3 -2-3 3 1z" fill="#888"/>
      <path d="M499 31 h3 v3 h3 v3 h-3 v3 h-3 v-3 h-3 v-3 h3z"/>
      <rect x="514.5" y="38.5" width="15" height="8" fill="#ddd" stroke="#777"/>
      <path d="M517 45 l10-10 2 1 -10 10z" fill="#888"/>
      <path d="M538 32 l14 14 M552 32 l-14 14" stroke="#888" stroke-width="2"/>
    </g>
    <!-- play pause stop -->
    <path d="M575 32 l11 7 -11 7z" fill="#9a9a9a" stroke="#777" stroke-width="0.5"/>
    <rect x="595.5" y="32.5" width="14" height="13" rx="2" fill="#a0a0a0" stroke="#888"/>
    <rect x="599" y="35" width="2" height="8" fill="#eee"/><rect x="604" y="35" width="2" height="8" fill="#eee"/>
    <rect x="619.5" y="32.5" width="14" height="13" rx="2" fill="#a0a0a0" stroke="#888"/>
    <rect x="623" y="36" width="7" height="6" fill="#eee"/>
    <!-- no debugger dropdown -->
    <rect x="638.5" y="29.5" width="157" height="19" fill="#e5e5e5" stroke="#acacac"/>
    <text x="641" y="43" font-family="Liberation Sans" font-size="12" fill="#000">No debugger</text>
    <path d="M781 37 h8 l-4 4z" fill="#000"/>
    <!-- icons right -->
    <path d="M805 34 l6 4 -6 4z" fill="#999"/>
    <rect x="809" y="37" width="11" height="10" fill="#f4f4f4" stroke="#888"/>
    <text x="811" y="46" font-family="Liberation Sans" font-size="9" font-weight="bold" fill="#777">c</text>
    <rect x="825.5" y="27.5" width="23" height="22" fill="#cce4f7" stroke="#99c9ef"/>
    <rect x="828" y="37" width="11" height="10" fill="#fff" stroke="#1f5fbf"/>
    <text x="830" y="46" font-family="Liberation Sans" font-size="9" font-weight="bold" fill="#1f4fa0">c</text>
    <path d="M837 31 l8 5 -8 5z" fill="#2aa52a"/>
    <rect x="862" y="33" width="14" height="14" fill="#fff" stroke="#2b5cab"/>
    <path d="M864 37 h10 M864 40 h10 M864 43 h10" stroke="#2b5cab"/>
    <circle cx="874" cy="35" r="3.5" fill="#e01010"/>
    <rect x="887" y="38" width="4" height="10" fill="#1a2a6a"/>
    <circle cx="889" cy="36" r="3.5" fill="#e01010"/>
    <path d="M895 31 h3 v3 h3 v3 h-3 v3 h-3 v-3 h-3 v-3 h3z" fill="#20a020"/>
    <rect x="910" y="38" width="4" height="10" fill="#888"/>
    <circle cx="912" cy="36" r="3.5" fill="#999"/>
    <path d="M917 31 l8 8 M925 31 l-8 8" stroke="#999" stroke-width="1.5"/>
  </svg>

</div>

<!-- VS window -->
<div id="vs" class="a">
  <!-- VS menu -->
  <div class="vm">
    <span style="left:-17px">ReSharper</span><span style="left:57px">Analyze</span><span style="left:118px">Window</span><span style="left:183px">Help</span>
  </div>
  <!-- toolbar -->
  <div class="t" style="left:-6px;top:58px;color:#f1f1f1;letter-spacing:0">Local Windows Debugger</div>
  <svg class="a" style="left:135px;top:63px" width="8" height="5"><path d="M0 0h7l-3.5 4z" fill="#999"/></svg>
  <div class="a" style="left:149px;top:55px;width:130px;height:22px;background:#333337;border:1px solid #434346"></div>
  <div class="t" style="left:153px;top:58px;color:#f1f1f1;letter-spacing:0">Auto</div>
  <svg class="a" style="left:266px;top:63px" width="8" height="5"><path d="M0 0h7l-3.5 4z" fill="#999"/></svg>
  <div class="a" style="left:285px;top:56px;width:1px;height:20px;background:#3f3f46"></div>
  <svg class="a" style="left:290px;top:55px" width="446" height="24">
    <path d="M8 5h4l1 1h5v8h-10z" fill="#dcb67a"/>
    <circle cx="7.8" cy="13" r="2.6" fill="#2d2d30" stroke="#75beff" stroke-width="1.4"/><path d="M6 15 l-3 3" stroke="#75beff" stroke-width="1.6"/>
    <path d="M25 14h6" stroke="#999"/><path d="M25 16h6l-3 3z" fill="#999"/>
    <g fill="#3e3e42"><rect x="37" y="2" width="1" height="1"/><rect x="37" y="5" width="1" height="1"/><rect x="37" y="8" width="1" height="1"/><rect x="37" y="11" width="1" height="1"/><rect x="37" y="14" width="1" height="1"/><rect x="37" y="17" width="1" height="1"/><rect x="40" y="3" width="1" height="1"/><rect x="40" y="6" width="1" height="1"/><rect x="40" y="9" width="1" height="1"/><rect x="40" y="12" width="1" height="1"/><rect x="40" y="15" width="1" height="1"/><rect x="40" y="18" width="1" height="1"/></g>
    <path d="M49 3 v9 l2.5-2 2 3.5 1.3-0.7 -2-3.5 h3.2z" fill="#75beff"/>
    <rect x="50.5" y="10.5" width="11" height="6" fill="none" stroke="#d0d0d0" stroke-width="1.2"/><path d="M53 13.5h6" stroke="#d0d0d0"/>
    <g stroke="#555" stroke-width="1"><path d="M71.5 5v12M73 5h10M74 8h9M76 11h7M76 14h7M76 17h7"/></g>
    <path d="M92.5 2v20" stroke="#3f3f46"/>
    <g stroke="#e0e0e0" stroke-width="1.2"><path d="M102 6h8M104 15h8"/></g><g stroke="#8dd28a" stroke-width="1.2"><path d="M104 9h8M104 12h8"/></g>
    <path d="M124 7 q0-3 3-3 q3 0 3 3 q0 2-2 3" fill="none" stroke="#75beff" stroke-width="1.4"/><path d="M123 6l1.5 2 1.5-2" fill="#75beff"/>
    <g stroke="#e0e0e0" stroke-width="1.2"><path d="M128 9h7M128 12h7M128 15h7"/></g>
    <path d="M144.5 2v20" stroke="#3f3f46"/>
    <path d="M153 4h11v13l-5.5-3.5-5.5 3.5z" fill="#c8c8c8"/>
    <g fill="#555"><path d="M181 5h6v12l-3-2-3 2z"/><path d="M176 8l3-3v2h3v2h-3v2z"/>
    <path d="M203 5h6v12l-3-2-3 2z"/><path d="M203 8l-3-3v2h-3v2h3v2z"/>
    <path d="M225 7h6v10l-3-2-3 2z"/></g><path d="M219 4l6 6M225 4l-6 6" stroke="#555" stroke-width="1.3"/>
    <path d="M240 14h6" stroke="#999"/><path d="M240 16h6l-3 3z" fill="#999"/>
  </svg>
  <!-- tabs -->
  <div class="t" style="left:-34px;top:89px;color:#f1f1f1;letter-spacing:0">stdafx.h</div>
  <div class="t" style="left:57px;top:89px;color:#f1f1f1;letter-spacing:-0.2px">natives.h</div>
  <div class="t" style="left:153px;top:89px;color:#f1f1f1;letter-spacing:0">directx.h</div>
  <div class="t" style="left:247px;top:89px;color:#f1f1f1;letter-spacing:0">hngvehicle.h</div>
  <div class="t" style="left:364px;top:89px;color:#f1f1f1;letter-spacing:0">utils.h</div>
  <div class="a" style="left:440px;top:86px;width:110px;height:20px;background:#007acc"></div>
  <div class="t" style="left:444px;top:89px;color:#fff;letter-spacing:0">directx.cpp*</div>
  <svg class="a" style="left:516px;top:89px" width="32" height="14"><path d="M3 7h4M7 3v8M7 4.5h5v5h-5M12 7h2" stroke="#fff" fill="none"/><path d="M20 2l9 9M29 2l-9 9" stroke="#fff" stroke-width="1.5"/></svg>
  <div class="t" style="left:555px;top:89px;color:#f1f1f1;letter-spacing:0">script.cpp</div>
  <div class="a" style="left:0;top:105px;width:736px;height:2px;background:#007acc"></div>
  <!-- nav bar -->
  <div class="a" style="left:0;top:107px;width:736px;height:22px;background:#2d2d30"></div>
  <div class="a" style="left:-10px;top:107px;width:322px;height:21px;background:#333337;border:1px solid #3f3f46"></div>
  <svg class="a" style="left:301px;top:115px" width="8" height="5"><path d="M0 0h7l-3.5 4z" fill="#999"/></svg>
  <div class="a" style="left:316px;top:107px;width:430px;height:21px;background:#333337;border:1px solid #3f3f46"></div>
  <div class="t" style="left:321px;top:109px;color:#dcdcdc;letter-spacing:-0.3px">{ }  DirectX</div>
  <div class="a" style="left:0;top:128px;width:736px;height:1px;background:#3f3f46"></div>
  <!-- editor -->
  <div class="a" style="left:0;top:129px;width:736px;height:528px;background:#1e1e1e"></div>
  <div class="a" style="left:-20px;top:289px;width:760px;height:16px;border:1px solid #464646"></div>
  <div id="vcode"><div class="a" style="left:0;top:0px;white-space:pre"><b class="k">void</b> <b class="k">__stdcall</b> hookD3D11Draw(<b class="ty">ID3D11DeviceContext</b>* <b class="p">pContext</b>, <b class="ty">UINT</b> <b class="p">VertexCount</b>, <b class="ty">UINT</b> <b class="p">StartVertexLocation</b>)</div><div class="a" style="left:0;top:32px;white-space:pre">    <b class="k">if</b> (Shared::currentFrame &lt;= <b class="n">1</b> || Shared::currentFrame == <b class="n">5</b>)</div><div class="a" style="left:0;top:48px;white-space:pre">        <b class="k">return</b> hookedDraw(<b class="p">pContext</b>, <b class="p">VertexCount</b>, <b class="p">StartVertexLocation</b>);</div><div class="a" style="left:0;top:80px;white-space:pre">    <b class="p">pContext</b>-&gt;IAGetVertexBuffers(<b class="n">0</b>, <b class="n">1</b>, &amp;veBuffer, &amp;Stride, &amp;veBufferOffset);</div><div class="a" style="left:0;top:112px;white-space:pre">    <b class="k">auto</b> curModel = <b class="ty">ignoreModel</b>{ Stride, <b class="p">VertexCount</b> };</div><div class="a" style="left:0;top:128px;white-space:pre">    <b class="k">auto</b> <b class="hl">foundModel</b> = <b class="p">std::</b>find_if(ignoredDrawModels.begin(), ignoredDrawModels.end(), [&amp;curModel](<b class="k">const</b> <b class="ty">ignoreModel</b>&amp; m)</div><div class="a" style="left:0;top:160px;white-space:pre">    <b class="ty">ID3D11PixelShader</b>* origShader;</div><div class="a" style="left:0;top:176px;white-space:pre">    <b class="ty">ID3D11ClassInstance</b>* origClassInstances;</div><div class="a" style="left:0;top:192px;white-space:pre">    <b class="ty">UINT</b> origNumClassInstances;</div><div class="a" style="left:0;top:224px;white-space:pre">    <b class="c">// get current shader</b></div><div class="a" style="left:0;top:240px;white-space:pre">    <b class="p">pContext</b>-&gt;PSGetShader(&amp;origShader, &amp;origClassInstances, &amp;origNumClassInstances);</div><div class="a" style="left:0;top:272px;white-space:pre">    <b class="k">if</b> (<b class="hl2">foundModel</b>)</div><div class="a" style="left:0;top:288px;white-space:pre">    {</div><div class="a" style="left:0;top:304px;white-space:pre">        <b class="c">// draw original</b></div><div class="a" style="left:0;top:320px;white-space:pre">        <b class="c">//hookedDraw(pContext, VertexCount, StartVertexLocation);</b></div><div class="a" style="left:0;top:352px;white-space:pre">        <b class="c">// set dummy shader</b></div><div class="a" style="left:0;top:368px;white-space:pre">        <b class="p">pContext</b>-&gt;PSSetShader(psBlack, <b class="k">nullptr</b>, <b class="mac">NULL</b>);</div><div class="a" style="left:0;top:384px;white-space:pre">        hookedDraw(<b class="p">pContext</b>, <b class="p">VertexCount</b>, <b class="p">StartVertexLocation</b>);</div><div class="a" style="left:0;top:416px;white-space:pre">        <b class="c">//SetDepthStencilState(NO_READ_NO_WRITE);</b></div><div class="a" style="left:0;top:432px;white-space:pre">        <b class="c">// restore original shader</b></div><div class="a" style="left:0;top:448px;white-space:pre">        <b class="p">pContext</b>-&gt;PSSetShader(origShader, &amp;origClassInstances, origNumClassInstances);</div><div class="a" style="left:0;top:480px;white-space:pre">        <b class="k">return</b> hookedDraw(<b class="p">pContext</b>, <b class="n">0</b>, <b class="n">0</b>);</div></div>
  <svg class="a" style="left:48px;top:302px" width="72" height="5"><path d="M0 4 l1.5 -2.5 l1.5 2.5 l1.5 -2.5 l1.5 2.5 l1.5 -2.5 l1.5 2.5 l1.5 -2.5 l1.5 2.5 l1.5 -2.5 l1.5 2.5 l1.5 -2.5 l1.5 2.5 l1.5 -2.5 l1.5 2.5 l1.5 -2.5 l1.5 2.5 l1.5 -2.5 l1.5 2.5 l1.5 -2.5 l1.5 2.5 l1.5 -2.5 l1.5 2.5 l1.5 -2.5 l1.5 2.5 l1.5 -2.5 l1.5 2.5 l1.5 -2.5 l1.5 2.5 l1.5 -2.5 l1.5 2.5 l1.5 -2.5 l1.5 2.5 l1.5 -2.5 l1.5 2.5 l1.5 -2.5 l1.5 2.5 l1.5 -2.5 l1.5 2.5 l1.5 -2.5 l1.5 2.5 l1.5 -2.5 l1.5 2.5 l1.5 -2.5 l1.5 2.5 l1.5 -2.5 l1.5 2.5 l1.5 -2.5 l1.5 2.5" fill="none" stroke="#00e000" stroke-width="1"/></svg>
  <svg class="a" style="left:0;top:160px" width="736" height="500">
    <g fill="#1ec51e"><rect x="91" y="18" width="2" height="1"/><rect x="94" y="18" width="2" height="1"/><rect x="97" y="18" width="2" height="1"/><rect x="335" y="18" width="2" height="1"/><rect x="338" y="18" width="2" height="1"/><rect x="341" y="18" width="2" height="1"/><rect x="440" y="18" width="2" height="1"/><rect x="443" y="18" width="2" height="1"/><rect x="446" y="18" width="2" height="1"/><rect x="566" y="18" width="2" height="1"/><rect x="569" y="18" width="2" height="1"/><rect x="572" y="18" width="2" height="1"/><rect x="48" y="130" width="2" height="1"/><rect x="51" y="130" width="2" height="1"/><rect x="54" y="130" width="2" height="1"/><rect x="146" y="177" width="2" height="1"/><rect x="149" y="177" width="2" height="1"/><rect x="152" y="177" width="2" height="1"/><rect x="160" y="193" width="2" height="1"/><rect x="163" y="193" width="2" height="1"/><rect x="166" y="193" width="2" height="1"/><rect x="48" y="209" width="2" height="1"/><rect x="51" y="209" width="2" height="1"/><rect x="54" y="209" width="2" height="1"/></g>
  </svg>

  <!-- codelens bar -->
  <div class="a" style="left:0;top:657px;width:157px;height:15px;background:#333337"></div>
  <div class="a" style="left:-2px;top:658px;font-size:11px;line-height:15px;color:#e0e0e0;white-space:pre;letter-spacing:-0.35px;-webkit-text-stroke:0.25px #e0e0e0">14 days ago | 1 author, 2 changes</div>
  <div class="a" style="left:157px;top:657px;width:579px;height:15px;background:#3e3e42"></div>
  <svg class="a" style="left:163px;top:660px" width="8" height="10"><path d="M6 0v9l-5-4.5z" fill="#999"/></svg>
  <div class="a" style="left:175px;top:661px;width:561px;height:9px;background:#686868"></div>
  <div class="a" style="left:0;top:672px;width:736px;height:10px;background:#3f3f46"></div>
  <div class="a" style="left:0;top:682px;width:736px;height:25px;background:#2d2d30"></div>
  <div class="a" style="left:0;top:689px;width:736px;height:5px;background-image:linear-gradient(45deg,#3a3a3e 25%,transparent 25%,transparent 75%,#3a3a3e 75%),linear-gradient(45deg,#3a3a3e 25%,transparent 25%,transparent 75%,#3a3a3e 75%);background-size:2px 2px;background-position:0 0,1px 1px"></div>
  <div class="a" style="left:-10px;top:706px;width:290px;height:21px;background:#333337;border:1px solid #434346"></div>
  <div class="t" style="left:-17px;top:709px;color:#f1f1f1;letter-spacing:0">Source Control - Git</div>
  <svg class="a" style="left:269px;top:715px" width="8" height="5"><path d="M0 0h7l-3.5 4z" fill="#999"/></svg>
  <svg class="a" style="left:284px;top:705px" width="140" height="22">
    <path d="M4.5 3v17M33.5 3v17M87.5 3v17M115.5 3v17" stroke="#3f3f46"/>
    <g stroke="#666"><path d="M12 14h10M10 17h12M10 20h12"/></g><path d="M14 5 q-3 0-3 3v3 M11 8 l-2 2 M11 8 l2 2" fill="none" stroke="#666" stroke-width="1.2"/>
    <g stroke="#ddd" stroke-width="1.2"><path d="M42 13h12M42 16h12M42 19h12"/></g><path d="M42 9l4-3v2h8v2h-8v2z" fill="#75beff"/>
    <g stroke="#ddd" stroke-width="1.2"><path d="M64 13h12M64 16h12M64 19h12"/></g><path d="M76 9l-4-3v2h-8v2h8v2z" fill="#75beff"/>
    <g stroke="#ddd" stroke-width="1.2"><path d="M94 13h14M94 16h14M94 19h14"/></g><path d="M95 4l6 6M101 4l-6 6" stroke="#f48771" stroke-width="1.6"/><path d="M103 7h5M103 10h5" stroke="#ddd"/>
    <text x="121" y="11" font-family="Liberation Sans" font-size="7" fill="#ddd">ab</text><text x="121" y="18" font-family="Liberation Sans" font-size="7" fill="#ddd">c</text><path d="M127 16h6v-5M127 16l2.5-2.5M127 16l2.5 2.5" stroke="#ddd" fill="none" stroke-width="1.2"/>
  </svg>
  <div class="a" style="left:0;top:729px;width:736px;height:106px;background:#252526"></div>
  <div class="a m" style="left:-7px;top:729px;font-size:12px;letter-spacing:-0.2px;line-height:16px;color:#dcdcdc;white-space:pre">Generator\app</div>
  <div class="a" style="left:0;top:835px;width:736px;height:18px;background:#3f3f46"></div>
  <div class="a" style="left:0;top:853px;width:736px;height:26px;background:#2d2d30"></div>
  <div class="t" style="left:-33px;top:855px;color:#d0d0d0;letter-spacing:0">Console</div>
  <div class="a" style="left:18px;top:852px;width:50px;height:21px;background:#252526;border:1px solid #3f3f46"></div>
  <div class="t" style="left:24px;top:855px;color:#0097fb;letter-spacing:0">Output</div>
  <!-- status -->
  <div class="a" style="left:0;top:879px;width:736px;height:24px;background:#007acc"></div>
  <div class="t" style="left:425px;top:883px;color:#fff;letter-spacing:-0.2px">Ln 396</div>
  <div class="t" style="left:517px;top:883px;color:#fff;letter-spacing:-0.2px">Col 24</div>
  <div class="t" style="left:608px;top:883px;color:#fff;letter-spacing:-0.2px">Ch 18</div>
</div>

</body></html>
